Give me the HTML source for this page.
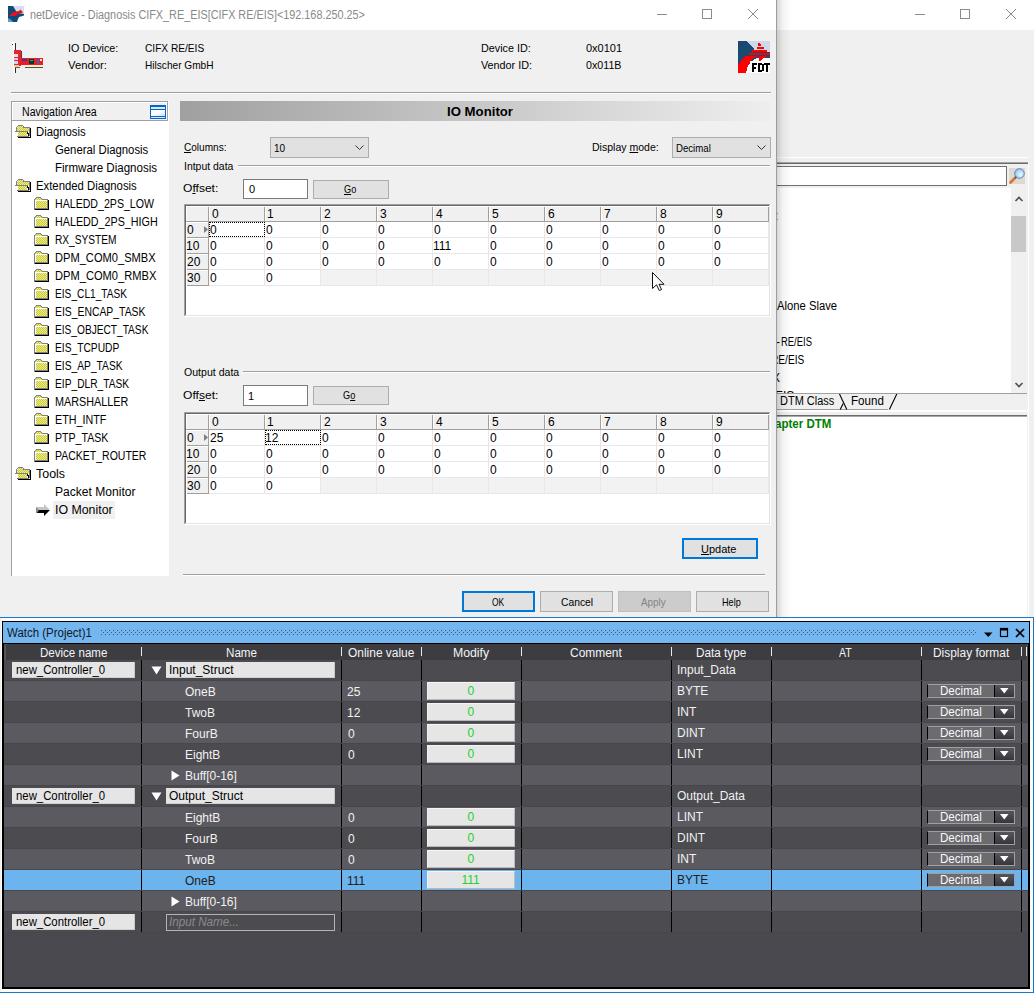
<!DOCTYPE html>
<html><head><meta charset="utf-8"><style>
html,body{margin:0;padding:0;}
body{width:1034px;height:993px;overflow:hidden;position:relative;background:#f0f0f0;font-family:"Liberation Sans",sans-serif;}
div{position:absolute;box-sizing:border-box;}
.t{height:auto;}
svg{position:absolute;}
</style></head><body>
<div style="left:776px;top:0px;width:258px;height:30px;background:#fff;"></div>
<svg style="left:900px;top:0px" width="134" height="30"><g stroke="#8c8c8c" stroke-width="1" fill="none" shape-rendering="crispEdges"><line x1="15" y1="14.5" x2="25" y2="14.5"/><rect x="60.5" y="9.5" width="9" height="9"/></g><g stroke="#8c8c8c" stroke-width="1" fill="none"><line x1="106" y1="9" x2="116" y2="19"/><line x1="116" y1="9" x2="106" y2="19"/></g></svg>
<div style="left:776px;top:157px;width:258px;height:1px;background:#fff;"></div>
<div style="left:776px;top:162px;width:252px;height:1px;background:#a4a4a4;"></div>
<div style="left:776px;top:163px;width:252px;height:1px;background:#6a6a6a;"></div>
<div style="left:1028px;top:163px;width:1px;height:454px;background:#fff;"></div>
<div style="left:760px;top:166px;width:247px;height:20px;background:#fff;border:1px solid #707070"></div>
<div style="left:1009px;top:168px;width:16px;height:16px;background:#dedad3;"></div>
<svg style="left:1009px;top:168px" width="16" height="16"><defs><radialGradient id="mg" cx="0.6" cy="0.6" r="0.6"><stop offset="0" stop-color="#e8fbff"/><stop offset="1" stop-color="#8ec8f0"/></radialGradient></defs><line x1="1.5" y1="14.5" x2="6" y2="10" stroke="#d9782a" stroke-width="2.6" stroke-linecap="round"/><line x1="6" y1="10" x2="8" y2="8" stroke="#3a5a7a" stroke-width="2"/><circle cx="10.5" cy="5.5" r="4.8" fill="url(#mg)" stroke="#6a70b0" stroke-width="0.9"/></svg>
<div style="left:760px;top:188px;width:251px;height:205px;background:#fff;"></div>
<div style="left:1011px;top:188px;width:16px;height:205px;background:#f0f0f0;"></div>
<div style="left:1011px;top:216px;width:15px;height:36px;background:#c8c8c8;"></div>
<svg style="left:1011px;top:188px" width="16" height="205"><polyline points="4.5,13 8,9.5 11.5,13" fill="none" stroke="#505050" stroke-width="1.6"/><polyline points="4.5,195 8,198.5 11.5,195" fill="none" stroke="#505050" stroke-width="1.6"/></svg>
<div style="left:760px;top:393px;width:267px;height:1px;background:#a0a0a0;"></div>
<div style="left:760px;top:409px;width:128px;height:1px;background:#a0a0a0;"></div>
<div style="left:760px;top:410px;width:268px;height:2px;background:#fff;"></div>
<div style="left:760px;top:415px;width:267px;height:1px;background:#6d6d6d;"></div>
<div style="left:760px;top:416px;width:267px;height:1px;background:#a8a8a8;"></div>
<div style="left:760px;top:417px;width:267px;height:200px;background:#fff;"></div>
<svg style="left:836px;top:392px" width="64" height="20"><g stroke="#000" stroke-width="1.1" fill="none"><line x1="3.5" y1="2" x2="10.8" y2="17.5"/><line x1="4.2" y1="17.5" x2="7.2" y2="11.5"/><line x1="60.8" y1="2" x2="53.4" y2="17.5"/></g></svg>
<div id="t0" class="t" style="left:775.00px;top:209px;font-size:12px;color:#000;font-weight:normal;font-family:'Liberation Sans',sans-serif;line-height:14px;white-space:pre;">:</div>
<div id="t1" class="t" style="left:777.00px;top:299px;font-size:12px;color:#000;font-weight:normal;font-family:'Liberation Sans',sans-serif;line-height:14px;white-space:pre;transform:scaleX(0.9375);transform-origin:0 0;">Alone Slave</div>
<div id="t2" class="t" style="left:781.28px;top:335px;font-size:12px;color:#000;font-weight:normal;font-family:'Liberation Sans',sans-serif;line-height:14px;white-space:pre;transform:scaleX(0.7857);transform-origin:0 0;">RE/EIS</div>
<div id="t3" class="t" style="left:776.00px;top:335px;font-size:12px;color:#000;font-weight:normal;font-family:'Liberation Sans',sans-serif;line-height:14px;white-space:pre;">-</div>
<div id="t4" class="t" style="left:771.08px;top:353px;font-size:12px;color:#000;font-weight:normal;font-family:'Liberation Sans',sans-serif;line-height:14px;white-space:pre;transform:scaleX(0.8462);transform-origin:0 0;">RE/EIS</div>
<div id="t5" class="t" style="left:772.00px;top:371px;font-size:12px;color:#000;font-weight:normal;font-family:'Liberation Sans',sans-serif;line-height:14px;white-space:pre;">X</div>
<div style="left:776px;top:388px;width:30px;height:5px;overflow:hidden"><div style="left:-1px;top:1px;font-size:12px;line-height:14px;white-space:pre;color:#000;font-family:'Liberation Sans',sans-serif">EIS</div></div>
<div id="t6" class="t" style="left:780.04px;top:394px;font-size:12px;color:#000;font-weight:normal;font-family:'Liberation Sans',sans-serif;line-height:14px;white-space:pre;transform:scaleX(0.9153);transform-origin:0 0;">DTM Class</div>
<div id="t7" class="t" style="left:851.40px;top:394px;font-size:12px;color:#000;font-weight:normal;font-family:'Liberation Sans',sans-serif;line-height:14px;white-space:pre;transform:scaleX(0.9647);transform-origin:0 0;">Found</div>
<div id="t8" class="t" style="left:774.98px;top:417px;font-size:12px;color:#008000;font-weight:bold;font-family:'Liberation Sans',sans-serif;line-height:14px;white-space:pre;transform:scaleX(0.9610);transform-origin:0 0;">apter DTM</div>
<div style="left:1029px;top:0px;width:5px;height:617px;background:#f0f0f0;top:30px;height:587px"></div>
<div style="left:0px;top:0px;width:776px;height:30px;background:#fff;"></div>
<div style="left:0px;top:30px;width:776px;height:587px;background:#f0f0f0;"></div>
<div style="left:776px;top:0px;width:1px;height:617px;background:#9c9c9c;"></div>
<div style="left:777px;top:0px;width:14px;height:617px;background:linear-gradient(to right, rgba(0,0,0,0.16), rgba(0,0,0,0.05) 40%, rgba(0,0,0,0));"></div>
<svg style="left:8px;top:6px" width="16" height="16"><rect x="0" y="0" width="16" height="16" fill="#fff"/><rect x="5" y="0" width="11" height="9" fill="#d8deec"/><polygon points="0,0 5,0 8,5 10,7 16,8 16,9.5 11,11 10,13 9,16 0,16" fill="#0f4a78"/><polygon points="0,12 3,13.5 5,16 0,16" fill="#5a9ad0"/><polygon points="1,10 3,8 5,6.5 8,5.5 11,5 12.5,3.5 15,6.5 12,7.5 10,7.5 9,9 7,10" fill="#e8101c"/></svg>
<svg style="left:640px;top:0px" width="136" height="30"><g stroke="#8c8c8c" stroke-width="1" fill="none" shape-rendering="crispEdges"><line x1="17" y1="14.5" x2="27" y2="14.5"/><rect x="62.5" y="9.5" width="9" height="9"/></g><g stroke="#8c8c8c" stroke-width="1" fill="none"><line x1="108" y1="9" x2="118" y2="19"/><line x1="118" y1="9" x2="108" y2="19"/></g></svg>
<svg style="left:8px;top:38px" width="40" height="40" shape-rendering="crispEdges"><rect x="3" y="4" width="3" height="1" fill="#fff"/><rect x="4" y="6" width="2" height="1" fill="#333"/><rect x="4" y="5" width="3" height="1" fill="#fff"/><rect x="5" y="5" width="2" height="30" fill="#fafafa"/><rect x="7" y="5" width="1" height="30" fill="#2a2a2a"/><rect x="6" y="12" width="7" height="16" fill="#e42630"/><rect x="6" y="16" width="4" height="3" fill="#f4e0d0"/><rect x="6" y="20" width="4" height="2" fill="#d8c8f0"/><rect x="6" y="23" width="4" height="3" fill="#c8d8f0"/><rect x="6" y="27" width="5" height="2" fill="#f0d090"/><rect x="13" y="13" width="1" height="7" fill="#404040"/><rect x="12" y="20" width="23" height="7" fill="#ee1c24"/><rect x="14" y="21" width="5" height="2" fill="#3040a0"/><rect x="21" y="21" width="5" height="5" fill="#0a3a2c"/><rect x="22" y="22" width="3" height="1" fill="#3aa08a"/><rect x="29" y="21" width="2" height="5" fill="#2a6ac0"/><rect x="32" y="21" width="2" height="2" fill="#fae8e8"/><rect x="16" y="27" width="19" height="2" fill="#f8f0c8"/><rect x="17" y="29" width="18" height="1" fill="#505050"/><rect x="7" y="29" width="5" height="1" fill="#606060"/></svg>
<svg style="left:738px;top:41px" width="32" height="32" shape-rendering="crispEdges"><rect x="0" y="0" width="32" height="32" fill="#fff"/><rect x="9" y="0" width="23" height="15" fill="#cdd8e8"/><polygon points="0,0 9,0 16,8 17,11 32,11 32,17 19,17 14,20 0,24" fill="#1a4a72"/><g fill="#f00"><polygon points="20,2 21,2 23,4 23,5 20,5"/><rect x="19" y="6" width="7" height="2"/><rect x="14" y="9" width="15" height="2"/><rect x="11" y="12" width="21" height="2"/><polygon points="0,23 3,20 5,17 8,15 19,15 19,16 15,17 13,19 12,22 10,25 9,28 8,32 0,32"/><polygon points="21,15 29,15 29,16 25,17 22,20 21,20"/></g><g fill="#000"><rect x="14" y="22" width="2" height="9"/><rect x="14" y="22" width="5" height="2"/><rect x="14" y="26" width="4" height="2"/><rect x="20" y="22" width="2" height="9"/><rect x="20" y="22" width="4" height="2"/><rect x="20" y="29" width="4" height="2"/><rect x="24" y="23" width="2" height="7"/><rect x="26" y="22" width="6" height="2"/><rect x="28" y="22" width="2" height="9"/></g></svg>
<div style="left:11px;top:92px;width:760px;height:1px;background:#a0a0a0;"></div>
<div style="left:11px;top:93px;width:760px;height:1px;background:#fff;"></div>
<div style="left:11px;top:101px;width:158px;height:475px;background:#fff;border-left:1px solid #a0a0a0"></div>
<div style="left:11px;top:101px;width:157px;height:20px;background:#f0f0f0;border:1px solid #a0a0a0;border-bottom:1px solid #a0a0a0;box-shadow:inset 1px 1px 0 #fff, inset -1px 0 0 #fff"></div>
<svg style="left:150px;top:105px" width="16" height="14" shape-rendering="crispEdges"><defs><linearGradient id="nvg" x1="0" y1="0" x2="1" y2="1"><stop offset="0.5" stop-color="#fbfdff"/><stop offset="1" stop-color="#c4dcf6"/></linearGradient></defs><rect x="0" y="0" width="16" height="14" fill="#0a62cc"/><rect x="1" y="2" width="14" height="2" fill="#cdeeff"/><rect x="1" y="5" width="14" height="6" fill="url(#nvg)"/><rect x="1" y="12" width="14" height="1" fill="#cdeeff"/></svg>
<div style="left:180px;top:101px;width:591px;height:20px;background:linear-gradient(to right,#a0a0a0,#eeeeee);"></div>
<div style="left:270px;top:137px;width:99px;height:21px;background:#e1e1e1;border:1px solid #adadad"></div>
<svg style="left:355px;top:145px" width="10" height="6"><polyline points="0.5,0.5 4.5,4.5 8.5,0.5" fill="none" stroke="#333" stroke-width="1"/></svg>
<div style="left:672px;top:137px;width:99px;height:21px;background:#e1e1e1;border:1px solid #adadad"></div>
<svg style="left:757px;top:145px" width="10" height="6"><polyline points="0.5,0.5 4.5,4.5 8.5,0.5" fill="none" stroke="#333" stroke-width="1"/></svg>
<div style="left:238px;top:165px;width:532px;height:1px;background:#a0a0a0;"></div>
<div style="left:238px;top:166px;width:532px;height:1px;background:#fff;"></div>
<div style="left:243px;top:371px;width:527px;height:1px;background:#a0a0a0;"></div>
<div style="left:243px;top:372px;width:527px;height:1px;background:#fff;"></div>
<div style="left:243px;top:179px;width:65px;height:20px;background:#fff;border:1px solid #7a7a7a"></div>
<div style="left:243px;top:385px;width:65px;height:21px;background:#fff;border:1px solid #7a7a7a"></div>
<div style="left:313px;top:180px;width:76px;height:19px;background:#e1e1e1;border:1px solid #adadad"></div>
<div style="left:313px;top:386px;width:76px;height:19px;background:#e1e1e1;border:1px solid #adadad"></div>
<div style="left:184px;top:204px;width:586px;height:112px;background:#fff;border-top:1px solid #a0a0a0;border-left:1px solid #a0a0a0"></div>
<div style="left:185px;top:205px;width:585px;height:111px;background:transparent;border-top:1px solid #696969;border-left:1px solid #696969"></div>
<div style="left:185px;top:315px;width:585px;height:1px;background:#e3e3e3;"></div>
<div style="left:769px;top:205px;width:1px;height:111px;background:#e3e3e3;"></div>
<div style="left:184px;top:316px;width:587px;height:1px;background:#fff;"></div>
<div style="left:770px;top:204px;width:1px;height:113px;background:#fff;"></div>
<div style="left:186px;top:206px;width:583px;height:15px;background:#f0f0f0;"></div>
<div style="left:186px;top:221px;width:23px;height:64px;background:#f0f0f0;"></div>
<div style="left:186px;top:221px;width:583px;height:1px;background:#a0a0a0;"></div>
<div style="left:208px;top:206px;width:1px;height:15px;background:#a0a0a0;"></div>
<div style="left:264px;top:206px;width:1px;height:15px;background:#a0a0a0;"></div>
<div style="left:320px;top:206px;width:1px;height:15px;background:#a0a0a0;"></div>
<div style="left:376px;top:206px;width:1px;height:15px;background:#a0a0a0;"></div>
<div style="left:432px;top:206px;width:1px;height:15px;background:#a0a0a0;"></div>
<div style="left:488px;top:206px;width:1px;height:15px;background:#a0a0a0;"></div>
<div style="left:544px;top:206px;width:1px;height:15px;background:#a0a0a0;"></div>
<div style="left:600px;top:206px;width:1px;height:15px;background:#a0a0a0;"></div>
<div style="left:656px;top:206px;width:1px;height:15px;background:#a0a0a0;"></div>
<div style="left:712px;top:206px;width:1px;height:15px;background:#a0a0a0;"></div>
<div style="left:768px;top:206px;width:1px;height:15px;background:#a0a0a0;"></div>
<div style="left:186px;top:206px;width:1px;height:15px;background:#fff;"></div>
<div style="left:209px;top:206px;width:1px;height:15px;background:#fff;"></div>
<div style="left:265px;top:206px;width:1px;height:15px;background:#fff;"></div>
<div style="left:321px;top:206px;width:1px;height:15px;background:#fff;"></div>
<div style="left:377px;top:206px;width:1px;height:15px;background:#fff;"></div>
<div style="left:433px;top:206px;width:1px;height:15px;background:#fff;"></div>
<div style="left:489px;top:206px;width:1px;height:15px;background:#fff;"></div>
<div style="left:545px;top:206px;width:1px;height:15px;background:#fff;"></div>
<div style="left:601px;top:206px;width:1px;height:15px;background:#fff;"></div>
<div style="left:657px;top:206px;width:1px;height:15px;background:#fff;"></div>
<div style="left:713px;top:206px;width:1px;height:15px;background:#fff;"></div>
<div style="left:186px;top:206px;width:583px;height:1px;background:#fff;"></div>
<div style="left:186px;top:237px;width:22px;height:1px;background:#a0a0a0;"></div>
<div style="left:186px;top:222px;width:22px;height:1px;background:#fff;"></div>
<div style="left:186px;top:253px;width:22px;height:1px;background:#a0a0a0;"></div>
<div style="left:186px;top:238px;width:22px;height:1px;background:#fff;"></div>
<div style="left:186px;top:269px;width:22px;height:1px;background:#a0a0a0;"></div>
<div style="left:186px;top:254px;width:22px;height:1px;background:#fff;"></div>
<div style="left:186px;top:285px;width:22px;height:1px;background:#a0a0a0;"></div>
<div style="left:186px;top:270px;width:22px;height:1px;background:#fff;"></div>
<div style="left:186px;top:222px;width:1px;height:64px;background:#fff;"></div>
<div style="left:208px;top:222px;width:1px;height:64px;background:#a0a0a0;"></div>
<div style="left:320px;top:270px;width:449px;height:15px;background:#f2f2f2;"></div>
<div style="left:209px;top:237px;width:560px;height:1px;background:#e8e8e8;"></div>
<div style="left:209px;top:253px;width:560px;height:1px;background:#e8e8e8;"></div>
<div style="left:209px;top:269px;width:560px;height:1px;background:#e8e8e8;"></div>
<div style="left:209px;top:285px;width:560px;height:1px;background:#e8e8e8;"></div>
<div style="left:264px;top:222px;width:1px;height:64px;background:#e8e8e8;"></div>
<div style="left:320px;top:222px;width:1px;height:64px;background:#e8e8e8;"></div>
<div style="left:376px;top:222px;width:1px;height:64px;background:#e8e8e8;"></div>
<div style="left:432px;top:222px;width:1px;height:64px;background:#e8e8e8;"></div>
<div style="left:488px;top:222px;width:1px;height:64px;background:#e8e8e8;"></div>
<div style="left:544px;top:222px;width:1px;height:64px;background:#e8e8e8;"></div>
<div style="left:600px;top:222px;width:1px;height:64px;background:#e8e8e8;"></div>
<div style="left:656px;top:222px;width:1px;height:64px;background:#e8e8e8;"></div>
<div style="left:712px;top:222px;width:1px;height:64px;background:#e8e8e8;"></div>
<div style="left:768px;top:222px;width:1px;height:64px;background:#e8e8e8;"></div>
<div style="left:209px;top:222px;width:56px;height:15px;background:transparent;border:1px dotted #000"></div>
<svg style="left:204px;top:226px" width="5" height="8"><polygon points="0,0 4,3.5 0,7" fill="#808080"/></svg>
<div style="left:184px;top:412px;width:586px;height:112px;background:#fff;border-top:1px solid #a0a0a0;border-left:1px solid #a0a0a0"></div>
<div style="left:185px;top:413px;width:585px;height:111px;background:transparent;border-top:1px solid #696969;border-left:1px solid #696969"></div>
<div style="left:185px;top:523px;width:585px;height:1px;background:#e3e3e3;"></div>
<div style="left:769px;top:413px;width:1px;height:111px;background:#e3e3e3;"></div>
<div style="left:184px;top:524px;width:587px;height:1px;background:#fff;"></div>
<div style="left:770px;top:412px;width:1px;height:113px;background:#fff;"></div>
<div style="left:186px;top:414px;width:583px;height:15px;background:#f0f0f0;"></div>
<div style="left:186px;top:429px;width:23px;height:64px;background:#f0f0f0;"></div>
<div style="left:186px;top:429px;width:583px;height:1px;background:#a0a0a0;"></div>
<div style="left:208px;top:414px;width:1px;height:15px;background:#a0a0a0;"></div>
<div style="left:264px;top:414px;width:1px;height:15px;background:#a0a0a0;"></div>
<div style="left:320px;top:414px;width:1px;height:15px;background:#a0a0a0;"></div>
<div style="left:376px;top:414px;width:1px;height:15px;background:#a0a0a0;"></div>
<div style="left:432px;top:414px;width:1px;height:15px;background:#a0a0a0;"></div>
<div style="left:488px;top:414px;width:1px;height:15px;background:#a0a0a0;"></div>
<div style="left:544px;top:414px;width:1px;height:15px;background:#a0a0a0;"></div>
<div style="left:600px;top:414px;width:1px;height:15px;background:#a0a0a0;"></div>
<div style="left:656px;top:414px;width:1px;height:15px;background:#a0a0a0;"></div>
<div style="left:712px;top:414px;width:1px;height:15px;background:#a0a0a0;"></div>
<div style="left:768px;top:414px;width:1px;height:15px;background:#a0a0a0;"></div>
<div style="left:186px;top:414px;width:1px;height:15px;background:#fff;"></div>
<div style="left:209px;top:414px;width:1px;height:15px;background:#fff;"></div>
<div style="left:265px;top:414px;width:1px;height:15px;background:#fff;"></div>
<div style="left:321px;top:414px;width:1px;height:15px;background:#fff;"></div>
<div style="left:377px;top:414px;width:1px;height:15px;background:#fff;"></div>
<div style="left:433px;top:414px;width:1px;height:15px;background:#fff;"></div>
<div style="left:489px;top:414px;width:1px;height:15px;background:#fff;"></div>
<div style="left:545px;top:414px;width:1px;height:15px;background:#fff;"></div>
<div style="left:601px;top:414px;width:1px;height:15px;background:#fff;"></div>
<div style="left:657px;top:414px;width:1px;height:15px;background:#fff;"></div>
<div style="left:713px;top:414px;width:1px;height:15px;background:#fff;"></div>
<div style="left:186px;top:414px;width:583px;height:1px;background:#fff;"></div>
<div style="left:186px;top:445px;width:22px;height:1px;background:#a0a0a0;"></div>
<div style="left:186px;top:430px;width:22px;height:1px;background:#fff;"></div>
<div style="left:186px;top:461px;width:22px;height:1px;background:#a0a0a0;"></div>
<div style="left:186px;top:446px;width:22px;height:1px;background:#fff;"></div>
<div style="left:186px;top:477px;width:22px;height:1px;background:#a0a0a0;"></div>
<div style="left:186px;top:462px;width:22px;height:1px;background:#fff;"></div>
<div style="left:186px;top:493px;width:22px;height:1px;background:#a0a0a0;"></div>
<div style="left:186px;top:478px;width:22px;height:1px;background:#fff;"></div>
<div style="left:186px;top:430px;width:1px;height:64px;background:#fff;"></div>
<div style="left:208px;top:430px;width:1px;height:64px;background:#a0a0a0;"></div>
<div style="left:320px;top:478px;width:449px;height:15px;background:#f2f2f2;"></div>
<div style="left:209px;top:445px;width:560px;height:1px;background:#e8e8e8;"></div>
<div style="left:209px;top:461px;width:560px;height:1px;background:#e8e8e8;"></div>
<div style="left:209px;top:477px;width:560px;height:1px;background:#e8e8e8;"></div>
<div style="left:209px;top:493px;width:560px;height:1px;background:#e8e8e8;"></div>
<div style="left:264px;top:430px;width:1px;height:64px;background:#e8e8e8;"></div>
<div style="left:320px;top:430px;width:1px;height:64px;background:#e8e8e8;"></div>
<div style="left:376px;top:430px;width:1px;height:64px;background:#e8e8e8;"></div>
<div style="left:432px;top:430px;width:1px;height:64px;background:#e8e8e8;"></div>
<div style="left:488px;top:430px;width:1px;height:64px;background:#e8e8e8;"></div>
<div style="left:544px;top:430px;width:1px;height:64px;background:#e8e8e8;"></div>
<div style="left:600px;top:430px;width:1px;height:64px;background:#e8e8e8;"></div>
<div style="left:656px;top:430px;width:1px;height:64px;background:#e8e8e8;"></div>
<div style="left:712px;top:430px;width:1px;height:64px;background:#e8e8e8;"></div>
<div style="left:768px;top:430px;width:1px;height:64px;background:#e8e8e8;"></div>
<div style="left:265px;top:430px;width:56px;height:15px;background:transparent;border:1px dotted #000"></div>
<svg style="left:204px;top:434px" width="5" height="8"><polygon points="0,0 4,3.5 0,7" fill="#808080"/></svg>
<div style="left:682px;top:538px;width:76px;height:21px;background:#e1e1e1;border:2px solid #0078d7"></div>
<div style="left:183px;top:574px;width:582px;height:1px;background:#a0a0a0;"></div>
<div style="left:183px;top:575px;width:582px;height:1px;background:#fff;"></div>
<div style="left:462px;top:591px;width:73px;height:21px;background:#e1e1e1;border:2px solid #0078d7"></div>
<div style="left:540px;top:591px;width:73px;height:21px;background:#e1e1e1;border:1px solid #adadad"></div>
<div style="left:618px;top:591px;width:73px;height:21px;background:#cccccc;border:1px solid #bfbfbf"></div>
<div style="left:696px;top:591px;width:73px;height:21px;background:#e1e1e1;border:1px solid #adadad"></div>
<div id="t9" class="t" style="left:30.00px;top:8px;font-size:12px;color:#8a8a8a;font-weight:normal;font-family:'Liberation Sans',sans-serif;line-height:14px;white-space:pre;transform:scaleX(0.9030);transform-origin:0 0;">netDevice - Diagnosis CIFX_RE_EIS[CIFX RE/EIS]&lt;192.168.250.25&gt;</div>
<div id="t10" class="t" style="left:68.00px;top:42px;font-size:11px;color:#000;font-weight:normal;font-family:'Liberation Sans',sans-serif;line-height:13px;white-space:pre;transform:scaleX(0.9804);transform-origin:0 0;">IO Device:</div>
<div id="t11" class="t" style="left:68.00px;top:59px;font-size:11px;color:#000;font-weight:normal;font-family:'Liberation Sans',sans-serif;line-height:13px;white-space:pre;transform:scaleX(1.0270);transform-origin:0 0;">Vendor:</div>
<div id="t12" class="t" style="left:145.00px;top:42px;font-size:11px;color:#000;font-weight:normal;font-family:'Liberation Sans',sans-serif;line-height:13px;white-space:pre;transform:scaleX(0.9219);transform-origin:0 0;">CIFX RE/EIS</div>
<div id="t13" class="t" style="left:145.00px;top:59px;font-size:11px;color:#000;font-weight:normal;font-family:'Liberation Sans',sans-serif;line-height:13px;white-space:pre;transform:scaleX(0.9189);transform-origin:0 0;">Hilscher GmbH</div>
<div id="t14" class="t" style="left:481.00px;top:42px;font-size:11px;color:#000;font-weight:normal;font-family:'Liberation Sans',sans-serif;line-height:13px;white-space:pre;transform:scaleX(0.9800);transform-origin:0 0;">Device ID:</div>
<div id="t15" class="t" style="left:481.00px;top:59px;font-size:11px;color:#000;font-weight:normal;font-family:'Liberation Sans',sans-serif;line-height:13px;white-space:pre;transform:scaleX(0.9808);transform-origin:0 0;">Vendor ID:</div>
<div id="t16" class="t" style="left:586.00px;top:42px;font-size:11px;color:#000;font-weight:normal;font-family:'Liberation Sans',sans-serif;line-height:13px;white-space:pre;">0x0101</div>
<div id="t17" class="t" style="left:586.00px;top:59px;font-size:11px;color:#000;font-weight:normal;font-family:'Liberation Sans',sans-serif;line-height:13px;white-space:pre;transform:scaleX(0.9730);transform-origin:0 0;">0x011B</div>
<div id="t18" class="t" style="left:22.00px;top:105px;font-size:12px;color:#000;font-weight:normal;font-family:'Liberation Sans',sans-serif;line-height:14px;white-space:pre;transform:scaleX(0.8824);transform-origin:0 0;">Navigation Area</div>
<div id="t19" class="t" style="left:447.00px;top:104px;font-size:13px;color:#000;font-weight:bold;font-family:'Liberation Sans',sans-serif;line-height:15px;white-space:pre;transform:scaleX(1.0154);transform-origin:0 0;">IO Monitor</div>
<svg style="left:0;top:0" width="1" height="1"><defs><pattern id="dth" width="2" height="2" patternUnits="userSpaceOnUse"><rect width="2" height="2" fill="#ffff00"/><rect x="1" y="0" width="1" height="1" fill="#b8b8c4"/><rect x="0" y="1" width="1" height="1" fill="#b8b8c4"/></pattern></defs></svg>
<div style="left:53px;top:501px;width:62px;height:18px;background:#f0f0f0;"></div>
<svg style="left:15px;top:125px" width="17" height="13" shape-rendering="crispEdges"><g fill="#808080"><rect x="3" y="0" width="5" height="1"/><rect x="2" y="1" width="1" height="1"/><rect x="8" y="1" width="1" height="2"/><rect x="9" y="2" width="6" height="1"/><rect x="1" y="2" width="1" height="4"/><rect x="14" y="3" width="1" height="8"/><rect x="0" y="6" width="13" height="1"/><rect x="2" y="11" width="12" height="1"/></g><rect x="3" y="1" width="5" height="2" fill="url(#dth)"/><rect x="2" y="3" width="12" height="3" fill="url(#dth)"/><rect x="1" y="7" width="2" height="4" fill="#fff"/><rect x="3" y="7" width="9" height="4" fill="url(#dth)"/><g fill="#000"><rect x="12" y="7" width="1" height="1"/><rect x="12" y="8" width="2" height="1"/><rect x="13" y="9" width="1" height="2"/><rect x="15" y="3" width="1" height="10"/><rect x="3" y="12" width="13" height="1"/></g></svg>
<div id="t20" class="t" style="left:36.00px;top:125px;font-size:12px;color:#000;font-weight:normal;font-family:'Liberation Sans',sans-serif;line-height:14px;white-space:pre;transform:scaleX(0.9434);transform-origin:0 0;">Diagnosis</div>
<div id="t21" class="t" style="left:55.00px;top:143px;font-size:12px;color:#000;font-weight:normal;font-family:'Liberation Sans',sans-serif;line-height:14px;white-space:pre;transform:scaleX(0.9444);transform-origin:0 0;">General Diagnosis</div>
<div id="t22" class="t" style="left:55.00px;top:161px;font-size:12px;color:#000;font-weight:normal;font-family:'Liberation Sans',sans-serif;line-height:14px;white-space:pre;transform:scaleX(0.9623);transform-origin:0 0;">Firmware Diagnosis</div>
<svg style="left:15px;top:179px" width="17" height="13" shape-rendering="crispEdges"><g fill="#808080"><rect x="3" y="0" width="5" height="1"/><rect x="2" y="1" width="1" height="1"/><rect x="8" y="1" width="1" height="2"/><rect x="9" y="2" width="6" height="1"/><rect x="1" y="2" width="1" height="4"/><rect x="14" y="3" width="1" height="8"/><rect x="0" y="6" width="13" height="1"/><rect x="2" y="11" width="12" height="1"/></g><rect x="3" y="1" width="5" height="2" fill="url(#dth)"/><rect x="2" y="3" width="12" height="3" fill="url(#dth)"/><rect x="1" y="7" width="2" height="4" fill="#fff"/><rect x="3" y="7" width="9" height="4" fill="url(#dth)"/><g fill="#000"><rect x="12" y="7" width="1" height="1"/><rect x="12" y="8" width="2" height="1"/><rect x="13" y="9" width="1" height="2"/><rect x="15" y="3" width="1" height="10"/><rect x="3" y="12" width="13" height="1"/></g></svg>
<div id="t23" class="t" style="left:36.00px;top:179px;font-size:12px;color:#000;font-weight:normal;font-family:'Liberation Sans',sans-serif;line-height:14px;white-space:pre;transform:scaleX(0.9439);transform-origin:0 0;">Extended Diagnosis</div>
<svg style="left:34px;top:197px" width="16" height="14" shape-rendering="crispEdges"><g fill="#808080"><rect x="2" y="0" width="5" height="1"/><rect x="1" y="1" width="1" height="1"/><rect x="7" y="1" width="1" height="1"/><rect x="8" y="2" width="6" height="1"/><rect x="0" y="2" width="1" height="11"/><rect x="13" y="2" width="1" height="11"/><rect x="1" y="11" width="13" height="1"/></g><rect x="2" y="1" width="5" height="1" fill="url(#dth)"/><rect x="1" y="2" width="7" height="1" fill="url(#dth)"/><rect x="1" y="3" width="12" height="1" fill="#fff"/><rect x="1" y="3" width="1" height="8" fill="#fff"/><rect x="2" y="4" width="11" height="7" fill="url(#dth)"/><g fill="#000"><rect x="14" y="3" width="1" height="10"/><rect x="1" y="12" width="14" height="1"/></g></svg>
<div id="t24" class="t" style="left:55.06px;top:197px;font-size:12px;color:#000;font-weight:normal;font-family:'Liberation Sans',sans-serif;line-height:14px;white-space:pre;transform:scaleX(0.8839);transform-origin:0 0;">HALEDD_2PS_LOW</div>
<svg style="left:34px;top:215px" width="16" height="14" shape-rendering="crispEdges"><g fill="#808080"><rect x="2" y="0" width="5" height="1"/><rect x="1" y="1" width="1" height="1"/><rect x="7" y="1" width="1" height="1"/><rect x="8" y="2" width="6" height="1"/><rect x="0" y="2" width="1" height="11"/><rect x="13" y="2" width="1" height="11"/><rect x="1" y="11" width="13" height="1"/></g><rect x="2" y="1" width="5" height="1" fill="url(#dth)"/><rect x="1" y="2" width="7" height="1" fill="url(#dth)"/><rect x="1" y="3" width="12" height="1" fill="#fff"/><rect x="1" y="3" width="1" height="8" fill="#fff"/><rect x="2" y="4" width="11" height="7" fill="url(#dth)"/><g fill="#000"><rect x="14" y="3" width="1" height="10"/><rect x="1" y="12" width="14" height="1"/></g></svg>
<div id="t25" class="t" style="left:55.05px;top:215px;font-size:12px;color:#000;font-weight:normal;font-family:'Liberation Sans',sans-serif;line-height:14px;white-space:pre;transform:scaleX(0.8947);transform-origin:0 0;">HALEDD_2PS_HIGH</div>
<svg style="left:34px;top:233px" width="16" height="14" shape-rendering="crispEdges"><g fill="#808080"><rect x="2" y="0" width="5" height="1"/><rect x="1" y="1" width="1" height="1"/><rect x="7" y="1" width="1" height="1"/><rect x="8" y="2" width="6" height="1"/><rect x="0" y="2" width="1" height="11"/><rect x="13" y="2" width="1" height="11"/><rect x="1" y="11" width="13" height="1"/></g><rect x="2" y="1" width="5" height="1" fill="url(#dth)"/><rect x="1" y="2" width="7" height="1" fill="url(#dth)"/><rect x="1" y="3" width="12" height="1" fill="#fff"/><rect x="1" y="3" width="1" height="8" fill="#fff"/><rect x="2" y="4" width="11" height="7" fill="url(#dth)"/><g fill="#000"><rect x="14" y="3" width="1" height="10"/><rect x="1" y="12" width="14" height="1"/></g></svg>
<div id="t26" class="t" style="left:55.08px;top:233px;font-size:12px;color:#000;font-weight:normal;font-family:'Liberation Sans',sans-serif;line-height:14px;white-space:pre;transform:scaleX(0.8472);transform-origin:0 0;">RX_SYSTEM</div>
<svg style="left:34px;top:251px" width="16" height="14" shape-rendering="crispEdges"><g fill="#808080"><rect x="2" y="0" width="5" height="1"/><rect x="1" y="1" width="1" height="1"/><rect x="7" y="1" width="1" height="1"/><rect x="8" y="2" width="6" height="1"/><rect x="0" y="2" width="1" height="11"/><rect x="13" y="2" width="1" height="11"/><rect x="1" y="11" width="13" height="1"/></g><rect x="2" y="1" width="5" height="1" fill="url(#dth)"/><rect x="1" y="2" width="7" height="1" fill="url(#dth)"/><rect x="1" y="3" width="12" height="1" fill="#fff"/><rect x="1" y="3" width="1" height="8" fill="#fff"/><rect x="2" y="4" width="11" height="7" fill="url(#dth)"/><g fill="#000"><rect x="14" y="3" width="1" height="10"/><rect x="1" y="12" width="14" height="1"/></g></svg>
<div id="t27" class="t" style="left:55.04px;top:251px;font-size:12px;color:#000;font-weight:normal;font-family:'Liberation Sans',sans-serif;line-height:14px;white-space:pre;transform:scaleX(0.9259);transform-origin:0 0;">DPM_COM0_SMBX</div>
<svg style="left:34px;top:269px" width="16" height="14" shape-rendering="crispEdges"><g fill="#808080"><rect x="2" y="0" width="5" height="1"/><rect x="1" y="1" width="1" height="1"/><rect x="7" y="1" width="1" height="1"/><rect x="8" y="2" width="6" height="1"/><rect x="0" y="2" width="1" height="11"/><rect x="13" y="2" width="1" height="11"/><rect x="1" y="11" width="13" height="1"/></g><rect x="2" y="1" width="5" height="1" fill="url(#dth)"/><rect x="1" y="2" width="7" height="1" fill="url(#dth)"/><rect x="1" y="3" width="12" height="1" fill="#fff"/><rect x="1" y="3" width="1" height="8" fill="#fff"/><rect x="2" y="4" width="11" height="7" fill="url(#dth)"/><g fill="#000"><rect x="14" y="3" width="1" height="10"/><rect x="1" y="12" width="14" height="1"/></g></svg>
<div id="t28" class="t" style="left:55.04px;top:269px;font-size:12px;color:#000;font-weight:normal;font-family:'Liberation Sans',sans-serif;line-height:14px;white-space:pre;transform:scaleX(0.9266);transform-origin:0 0;">DPM_COM0_RMBX</div>
<svg style="left:34px;top:287px" width="16" height="14" shape-rendering="crispEdges"><g fill="#808080"><rect x="2" y="0" width="5" height="1"/><rect x="1" y="1" width="1" height="1"/><rect x="7" y="1" width="1" height="1"/><rect x="8" y="2" width="6" height="1"/><rect x="0" y="2" width="1" height="11"/><rect x="13" y="2" width="1" height="11"/><rect x="1" y="11" width="13" height="1"/></g><rect x="2" y="1" width="5" height="1" fill="url(#dth)"/><rect x="1" y="2" width="7" height="1" fill="url(#dth)"/><rect x="1" y="3" width="12" height="1" fill="#fff"/><rect x="1" y="3" width="1" height="8" fill="#fff"/><rect x="2" y="4" width="11" height="7" fill="url(#dth)"/><g fill="#000"><rect x="14" y="3" width="1" height="10"/><rect x="1" y="12" width="14" height="1"/></g></svg>
<div id="t29" class="t" style="left:55.08px;top:287px;font-size:12px;color:#000;font-weight:normal;font-family:'Liberation Sans',sans-serif;line-height:14px;white-space:pre;transform:scaleX(0.8471);transform-origin:0 0;">EIS_CL1_TASK</div>
<svg style="left:34px;top:305px" width="16" height="14" shape-rendering="crispEdges"><g fill="#808080"><rect x="2" y="0" width="5" height="1"/><rect x="1" y="1" width="1" height="1"/><rect x="7" y="1" width="1" height="1"/><rect x="8" y="2" width="6" height="1"/><rect x="0" y="2" width="1" height="11"/><rect x="13" y="2" width="1" height="11"/><rect x="1" y="11" width="13" height="1"/></g><rect x="2" y="1" width="5" height="1" fill="url(#dth)"/><rect x="1" y="2" width="7" height="1" fill="url(#dth)"/><rect x="1" y="3" width="12" height="1" fill="#fff"/><rect x="1" y="3" width="1" height="8" fill="#fff"/><rect x="2" y="4" width="11" height="7" fill="url(#dth)"/><g fill="#000"><rect x="14" y="3" width="1" height="10"/><rect x="1" y="12" width="14" height="1"/></g></svg>
<div id="t30" class="t" style="left:55.07px;top:305px;font-size:12px;color:#000;font-weight:normal;font-family:'Liberation Sans',sans-serif;line-height:14px;white-space:pre;transform:scaleX(0.8654);transform-origin:0 0;">EIS_ENCAP_TASK</div>
<svg style="left:34px;top:323px" width="16" height="14" shape-rendering="crispEdges"><g fill="#808080"><rect x="2" y="0" width="5" height="1"/><rect x="1" y="1" width="1" height="1"/><rect x="7" y="1" width="1" height="1"/><rect x="8" y="2" width="6" height="1"/><rect x="0" y="2" width="1" height="11"/><rect x="13" y="2" width="1" height="11"/><rect x="1" y="11" width="13" height="1"/></g><rect x="2" y="1" width="5" height="1" fill="url(#dth)"/><rect x="1" y="2" width="7" height="1" fill="url(#dth)"/><rect x="1" y="3" width="12" height="1" fill="#fff"/><rect x="1" y="3" width="1" height="8" fill="#fff"/><rect x="2" y="4" width="11" height="7" fill="url(#dth)"/><g fill="#000"><rect x="14" y="3" width="1" height="10"/><rect x="1" y="12" width="14" height="1"/></g></svg>
<div id="t31" class="t" style="left:55.08px;top:323px;font-size:12px;color:#000;font-weight:normal;font-family:'Liberation Sans',sans-serif;line-height:14px;white-space:pre;transform:scaleX(0.8455);transform-origin:0 0;">EIS_OBJECT_TASK</div>
<svg style="left:34px;top:341px" width="16" height="14" shape-rendering="crispEdges"><g fill="#808080"><rect x="2" y="0" width="5" height="1"/><rect x="1" y="1" width="1" height="1"/><rect x="7" y="1" width="1" height="1"/><rect x="8" y="2" width="6" height="1"/><rect x="0" y="2" width="1" height="11"/><rect x="13" y="2" width="1" height="11"/><rect x="1" y="11" width="13" height="1"/></g><rect x="2" y="1" width="5" height="1" fill="url(#dth)"/><rect x="1" y="2" width="7" height="1" fill="url(#dth)"/><rect x="1" y="3" width="12" height="1" fill="#fff"/><rect x="1" y="3" width="1" height="8" fill="#fff"/><rect x="2" y="4" width="11" height="7" fill="url(#dth)"/><g fill="#000"><rect x="14" y="3" width="1" height="10"/><rect x="1" y="12" width="14" height="1"/></g></svg>
<div id="t32" class="t" style="left:55.07px;top:341px;font-size:12px;color:#000;font-weight:normal;font-family:'Liberation Sans',sans-serif;line-height:14px;white-space:pre;transform:scaleX(0.8533);transform-origin:0 0;">EIS_TCPUDP</div>
<svg style="left:34px;top:359px" width="16" height="14" shape-rendering="crispEdges"><g fill="#808080"><rect x="2" y="0" width="5" height="1"/><rect x="1" y="1" width="1" height="1"/><rect x="7" y="1" width="1" height="1"/><rect x="8" y="2" width="6" height="1"/><rect x="0" y="2" width="1" height="11"/><rect x="13" y="2" width="1" height="11"/><rect x="1" y="11" width="13" height="1"/></g><rect x="2" y="1" width="5" height="1" fill="url(#dth)"/><rect x="1" y="2" width="7" height="1" fill="url(#dth)"/><rect x="1" y="3" width="12" height="1" fill="#fff"/><rect x="1" y="3" width="1" height="8" fill="#fff"/><rect x="2" y="4" width="11" height="7" fill="url(#dth)"/><g fill="#000"><rect x="14" y="3" width="1" height="10"/><rect x="1" y="12" width="14" height="1"/></g></svg>
<div id="t33" class="t" style="left:55.07px;top:359px;font-size:12px;color:#000;font-weight:normal;font-family:'Liberation Sans',sans-serif;line-height:14px;white-space:pre;transform:scaleX(0.8544);transform-origin:0 0;">EIS_AP_TASK</div>
<svg style="left:34px;top:377px" width="16" height="14" shape-rendering="crispEdges"><g fill="#808080"><rect x="2" y="0" width="5" height="1"/><rect x="1" y="1" width="1" height="1"/><rect x="7" y="1" width="1" height="1"/><rect x="8" y="2" width="6" height="1"/><rect x="0" y="2" width="1" height="11"/><rect x="13" y="2" width="1" height="11"/><rect x="1" y="11" width="13" height="1"/></g><rect x="2" y="1" width="5" height="1" fill="url(#dth)"/><rect x="1" y="2" width="7" height="1" fill="url(#dth)"/><rect x="1" y="3" width="12" height="1" fill="#fff"/><rect x="1" y="3" width="1" height="8" fill="#fff"/><rect x="2" y="4" width="11" height="7" fill="url(#dth)"/><g fill="#000"><rect x="14" y="3" width="1" height="10"/><rect x="1" y="12" width="14" height="1"/></g></svg>
<div id="t34" class="t" style="left:55.07px;top:377px;font-size:12px;color:#000;font-weight:normal;font-family:'Liberation Sans',sans-serif;line-height:14px;white-space:pre;transform:scaleX(0.8506);transform-origin:0 0;">EIP_DLR_TASK</div>
<svg style="left:34px;top:395px" width="16" height="14" shape-rendering="crispEdges"><g fill="#808080"><rect x="2" y="0" width="5" height="1"/><rect x="1" y="1" width="1" height="1"/><rect x="7" y="1" width="1" height="1"/><rect x="8" y="2" width="6" height="1"/><rect x="0" y="2" width="1" height="11"/><rect x="13" y="2" width="1" height="11"/><rect x="1" y="11" width="13" height="1"/></g><rect x="2" y="1" width="5" height="1" fill="url(#dth)"/><rect x="1" y="2" width="7" height="1" fill="url(#dth)"/><rect x="1" y="3" width="12" height="1" fill="#fff"/><rect x="1" y="3" width="1" height="8" fill="#fff"/><rect x="2" y="4" width="11" height="7" fill="url(#dth)"/><g fill="#000"><rect x="14" y="3" width="1" height="10"/><rect x="1" y="12" width="14" height="1"/></g></svg>
<div id="t35" class="t" style="left:55.05px;top:395px;font-size:12px;color:#000;font-weight:normal;font-family:'Liberation Sans',sans-serif;line-height:14px;white-space:pre;transform:scaleX(0.9012);transform-origin:0 0;">MARSHALLER</div>
<svg style="left:34px;top:413px" width="16" height="14" shape-rendering="crispEdges"><g fill="#808080"><rect x="2" y="0" width="5" height="1"/><rect x="1" y="1" width="1" height="1"/><rect x="7" y="1" width="1" height="1"/><rect x="8" y="2" width="6" height="1"/><rect x="0" y="2" width="1" height="11"/><rect x="13" y="2" width="1" height="11"/><rect x="1" y="11" width="13" height="1"/></g><rect x="2" y="1" width="5" height="1" fill="url(#dth)"/><rect x="1" y="2" width="7" height="1" fill="url(#dth)"/><rect x="1" y="3" width="12" height="1" fill="#fff"/><rect x="1" y="3" width="1" height="8" fill="#fff"/><rect x="2" y="4" width="11" height="7" fill="url(#dth)"/><g fill="#000"><rect x="14" y="3" width="1" height="10"/><rect x="1" y="12" width="14" height="1"/></g></svg>
<div id="t36" class="t" style="left:55.05px;top:413px;font-size:12px;color:#000;font-weight:normal;font-family:'Liberation Sans',sans-serif;line-height:14px;white-space:pre;transform:scaleX(0.8947);transform-origin:0 0;">ETH_INTF</div>
<svg style="left:34px;top:431px" width="16" height="14" shape-rendering="crispEdges"><g fill="#808080"><rect x="2" y="0" width="5" height="1"/><rect x="1" y="1" width="1" height="1"/><rect x="7" y="1" width="1" height="1"/><rect x="8" y="2" width="6" height="1"/><rect x="0" y="2" width="1" height="11"/><rect x="13" y="2" width="1" height="11"/><rect x="1" y="11" width="13" height="1"/></g><rect x="2" y="1" width="5" height="1" fill="url(#dth)"/><rect x="1" y="2" width="7" height="1" fill="url(#dth)"/><rect x="1" y="3" width="12" height="1" fill="#fff"/><rect x="1" y="3" width="1" height="8" fill="#fff"/><rect x="2" y="4" width="11" height="7" fill="url(#dth)"/><g fill="#000"><rect x="14" y="3" width="1" height="10"/><rect x="1" y="12" width="14" height="1"/></g></svg>
<div id="t37" class="t" style="left:55.06px;top:431px;font-size:12px;color:#000;font-weight:normal;font-family:'Liberation Sans',sans-serif;line-height:14px;white-space:pre;transform:scaleX(0.8833);transform-origin:0 0;">PTP_TASK</div>
<svg style="left:34px;top:449px" width="16" height="14" shape-rendering="crispEdges"><g fill="#808080"><rect x="2" y="0" width="5" height="1"/><rect x="1" y="1" width="1" height="1"/><rect x="7" y="1" width="1" height="1"/><rect x="8" y="2" width="6" height="1"/><rect x="0" y="2" width="1" height="11"/><rect x="13" y="2" width="1" height="11"/><rect x="1" y="11" width="13" height="1"/></g><rect x="2" y="1" width="5" height="1" fill="url(#dth)"/><rect x="1" y="2" width="7" height="1" fill="url(#dth)"/><rect x="1" y="3" width="12" height="1" fill="#fff"/><rect x="1" y="3" width="1" height="8" fill="#fff"/><rect x="2" y="4" width="11" height="7" fill="url(#dth)"/><g fill="#000"><rect x="14" y="3" width="1" height="10"/><rect x="1" y="12" width="14" height="1"/></g></svg>
<div id="t38" class="t" style="left:55.06px;top:449px;font-size:12px;color:#000;font-weight:normal;font-family:'Liberation Sans',sans-serif;line-height:14px;white-space:pre;transform:scaleX(0.8750);transform-origin:0 0;">PACKET_ROUTER</div>
<svg style="left:15px;top:467px" width="17" height="13" shape-rendering="crispEdges"><g fill="#808080"><rect x="3" y="0" width="5" height="1"/><rect x="2" y="1" width="1" height="1"/><rect x="8" y="1" width="1" height="2"/><rect x="9" y="2" width="6" height="1"/><rect x="1" y="2" width="1" height="4"/><rect x="14" y="3" width="1" height="8"/><rect x="0" y="6" width="13" height="1"/><rect x="2" y="11" width="12" height="1"/></g><rect x="3" y="1" width="5" height="2" fill="url(#dth)"/><rect x="2" y="3" width="12" height="3" fill="url(#dth)"/><rect x="1" y="7" width="2" height="4" fill="#fff"/><rect x="3" y="7" width="9" height="4" fill="url(#dth)"/><g fill="#000"><rect x="12" y="7" width="1" height="1"/><rect x="12" y="8" width="2" height="1"/><rect x="13" y="9" width="1" height="2"/><rect x="15" y="3" width="1" height="10"/><rect x="3" y="12" width="13" height="1"/></g></svg>
<div id="t39" class="t" style="left:36.00px;top:467px;font-size:12px;color:#000;font-weight:normal;font-family:'Liberation Sans',sans-serif;line-height:14px;white-space:pre;transform:scaleX(1.0357);transform-origin:0 0;">Tools</div>
<div id="t40" class="t" style="left:55.00px;top:485px;font-size:12px;color:#000;font-weight:normal;font-family:'Liberation Sans',sans-serif;line-height:14px;white-space:pre;transform:scaleX(1.0063);transform-origin:0 0;">Packet Monitor</div>
<svg style="left:35px;top:503px" width="16" height="14"><polygon points="1,4 9,4 9,1 15,7 1,7" fill="#c4c4c4"/><polygon points="1,7 15,7 9,13 9,10 1,10" fill="#000"/><polygon points="1,4 4,7 2,10 1,10" fill="#8a8a8a"/></svg>
<div id="t41" class="t" style="left:54.99px;top:503px;font-size:12px;color:#000;font-weight:normal;font-family:'Liberation Sans',sans-serif;line-height:14px;white-space:pre;transform:scaleX(1.0286);transform-origin:0 0;">IO Monitor</div>
<div id="t42" class="t" style="left:184.33px;top:141px;font-size:11px;color:#000;font-weight:normal;font-family:'Liberation Sans',sans-serif;line-height:13px;white-space:pre;transform:scaleX(0.9149);transform-origin:0 0;"><u>C</u>olumns:</div>
<div id="t43" class="t" style="left:273.89px;top:142px;font-size:11px;color:#000;font-weight:normal;font-family:'Liberation Sans',sans-serif;line-height:13px;white-space:pre;transform:scaleX(0.9091);transform-origin:0 0;">10</div>
<div id="t44" class="t" style="left:592.00px;top:141px;font-size:11px;color:#000;font-weight:normal;font-family:'Liberation Sans',sans-serif;line-height:13px;white-space:pre;transform:scaleX(0.9565);transform-origin:0 0;">Display <u>m</u>ode:</div>
<div id="t45" class="t" style="left:676.00px;top:142px;font-size:11px;color:#000;font-weight:normal;font-family:'Liberation Sans',sans-serif;line-height:13px;white-space:pre;transform:scaleX(0.8750);transform-origin:0 0;">Decimal</div>
<div id="t46" class="t" style="left:184.21px;top:160px;font-size:11px;color:#000;font-weight:normal;font-family:'Liberation Sans',sans-serif;line-height:13px;white-space:pre;transform:scaleX(0.9500);transform-origin:0 0;">Intput data</div>
<div id="t47" class="t" style="left:183.36px;top:182px;font-size:11px;color:#000;font-weight:normal;font-family:'Liberation Sans',sans-serif;line-height:13px;white-space:pre;transform:scaleX(1.0968);transform-origin:0 0;">O<u>f</u>fset:</div>
<div id="t48" class="t" style="left:249.00px;top:183px;font-size:11px;color:#000;font-weight:normal;font-family:'Liberation Sans',sans-serif;line-height:13px;white-space:pre;">0</div>
<div id="t49" class="t" style="left:343.92px;top:183px;font-size:11px;color:#000;font-weight:normal;font-family:'Liberation Sans',sans-serif;line-height:13px;white-space:pre;transform:scaleX(0.8333);transform-origin:0 0;"><u>G</u>o</div>
<div id="t50" class="t" style="left:184.00px;top:366px;font-size:11px;color:#000;font-weight:normal;font-family:'Liberation Sans',sans-serif;line-height:13px;white-space:pre;transform:scaleX(0.9603);transform-origin:0 0;">Output data</div>
<div id="t51" class="t" style="left:183.36px;top:389px;font-size:11px;color:#000;font-weight:normal;font-family:'Liberation Sans',sans-serif;line-height:13px;white-space:pre;transform:scaleX(1.0968);transform-origin:0 0;">Off<u>s</u>et:</div>
<div id="t52" class="t" style="left:248.00px;top:390px;font-size:11px;color:#000;font-weight:normal;font-family:'Liberation Sans',sans-serif;line-height:13px;white-space:pre;">1</div>
<div id="t53" class="t" style="left:343.08px;top:389px;font-size:11px;color:#000;font-weight:normal;font-family:'Liberation Sans',sans-serif;line-height:13px;white-space:pre;transform:scaleX(0.8333);transform-origin:0 0;">G<u>o</u></div>
<div id="t54" class="t" style="left:212.00px;top:207px;font-size:12px;color:#000;font-weight:normal;font-family:'Liberation Sans',sans-serif;line-height:14px;white-space:pre;">0</div>
<div id="t55" class="t" style="left:267.00px;top:207px;font-size:12px;color:#000;font-weight:normal;font-family:'Liberation Sans',sans-serif;line-height:14px;white-space:pre;">1</div>
<div id="t56" class="t" style="left:324.00px;top:207px;font-size:12px;color:#000;font-weight:normal;font-family:'Liberation Sans',sans-serif;line-height:14px;white-space:pre;">2</div>
<div id="t57" class="t" style="left:380.00px;top:207px;font-size:12px;color:#000;font-weight:normal;font-family:'Liberation Sans',sans-serif;line-height:14px;white-space:pre;">3</div>
<div id="t58" class="t" style="left:436.00px;top:207px;font-size:12px;color:#000;font-weight:normal;font-family:'Liberation Sans',sans-serif;line-height:14px;white-space:pre;">4</div>
<div id="t59" class="t" style="left:492.00px;top:207px;font-size:12px;color:#000;font-weight:normal;font-family:'Liberation Sans',sans-serif;line-height:14px;white-space:pre;">5</div>
<div id="t60" class="t" style="left:548.00px;top:207px;font-size:12px;color:#000;font-weight:normal;font-family:'Liberation Sans',sans-serif;line-height:14px;white-space:pre;">6</div>
<div id="t61" class="t" style="left:604.00px;top:207px;font-size:12px;color:#000;font-weight:normal;font-family:'Liberation Sans',sans-serif;line-height:14px;white-space:pre;">7</div>
<div id="t62" class="t" style="left:660.00px;top:207px;font-size:12px;color:#000;font-weight:normal;font-family:'Liberation Sans',sans-serif;line-height:14px;white-space:pre;">8</div>
<div id="t63" class="t" style="left:716.00px;top:207px;font-size:12px;color:#000;font-weight:normal;font-family:'Liberation Sans',sans-serif;line-height:14px;white-space:pre;">9</div>
<div id="t64" class="t" style="left:187.00px;top:223px;font-size:12px;color:#000;font-weight:normal;font-family:'Liberation Sans',sans-serif;line-height:14px;white-space:pre;">0</div>
<div id="t65" class="t" style="left:186.00px;top:239px;font-size:12px;color:#000;font-weight:normal;font-family:'Liberation Sans',sans-serif;line-height:14px;white-space:pre;">10</div>
<div id="t66" class="t" style="left:187.00px;top:255px;font-size:12px;color:#000;font-weight:normal;font-family:'Liberation Sans',sans-serif;line-height:14px;white-space:pre;">20</div>
<div id="t67" class="t" style="left:187.00px;top:271px;font-size:12px;color:#000;font-weight:normal;font-family:'Liberation Sans',sans-serif;line-height:14px;white-space:pre;">30</div>
<div id="t68" class="t" style="left:210.00px;top:223px;font-size:12px;color:#000;font-weight:normal;font-family:'Liberation Sans',sans-serif;line-height:14px;white-space:pre;">0</div>
<div id="t69" class="t" style="left:266.00px;top:223px;font-size:12px;color:#000;font-weight:normal;font-family:'Liberation Sans',sans-serif;line-height:14px;white-space:pre;">0</div>
<div id="t70" class="t" style="left:322.00px;top:223px;font-size:12px;color:#000;font-weight:normal;font-family:'Liberation Sans',sans-serif;line-height:14px;white-space:pre;">0</div>
<div id="t71" class="t" style="left:378.00px;top:223px;font-size:12px;color:#000;font-weight:normal;font-family:'Liberation Sans',sans-serif;line-height:14px;white-space:pre;">0</div>
<div id="t72" class="t" style="left:434.00px;top:223px;font-size:12px;color:#000;font-weight:normal;font-family:'Liberation Sans',sans-serif;line-height:14px;white-space:pre;">0</div>
<div id="t73" class="t" style="left:490.00px;top:223px;font-size:12px;color:#000;font-weight:normal;font-family:'Liberation Sans',sans-serif;line-height:14px;white-space:pre;">0</div>
<div id="t74" class="t" style="left:546.00px;top:223px;font-size:12px;color:#000;font-weight:normal;font-family:'Liberation Sans',sans-serif;line-height:14px;white-space:pre;">0</div>
<div id="t75" class="t" style="left:602.00px;top:223px;font-size:12px;color:#000;font-weight:normal;font-family:'Liberation Sans',sans-serif;line-height:14px;white-space:pre;">0</div>
<div id="t76" class="t" style="left:658.00px;top:223px;font-size:12px;color:#000;font-weight:normal;font-family:'Liberation Sans',sans-serif;line-height:14px;white-space:pre;">0</div>
<div id="t77" class="t" style="left:714.00px;top:223px;font-size:12px;color:#000;font-weight:normal;font-family:'Liberation Sans',sans-serif;line-height:14px;white-space:pre;">0</div>
<div id="t78" class="t" style="left:210.00px;top:239px;font-size:12px;color:#000;font-weight:normal;font-family:'Liberation Sans',sans-serif;line-height:14px;white-space:pre;">0</div>
<div id="t79" class="t" style="left:266.00px;top:239px;font-size:12px;color:#000;font-weight:normal;font-family:'Liberation Sans',sans-serif;line-height:14px;white-space:pre;">0</div>
<div id="t80" class="t" style="left:322.00px;top:239px;font-size:12px;color:#000;font-weight:normal;font-family:'Liberation Sans',sans-serif;line-height:14px;white-space:pre;">0</div>
<div id="t81" class="t" style="left:378.00px;top:239px;font-size:12px;color:#000;font-weight:normal;font-family:'Liberation Sans',sans-serif;line-height:14px;white-space:pre;">0</div>
<div id="t82" class="t" style="left:433.00px;top:239px;font-size:12px;color:#000;font-weight:normal;font-family:'Liberation Sans',sans-serif;line-height:14px;white-space:pre;">111</div>
<div id="t83" class="t" style="left:490.00px;top:239px;font-size:12px;color:#000;font-weight:normal;font-family:'Liberation Sans',sans-serif;line-height:14px;white-space:pre;">0</div>
<div id="t84" class="t" style="left:546.00px;top:239px;font-size:12px;color:#000;font-weight:normal;font-family:'Liberation Sans',sans-serif;line-height:14px;white-space:pre;">0</div>
<div id="t85" class="t" style="left:602.00px;top:239px;font-size:12px;color:#000;font-weight:normal;font-family:'Liberation Sans',sans-serif;line-height:14px;white-space:pre;">0</div>
<div id="t86" class="t" style="left:658.00px;top:239px;font-size:12px;color:#000;font-weight:normal;font-family:'Liberation Sans',sans-serif;line-height:14px;white-space:pre;">0</div>
<div id="t87" class="t" style="left:714.00px;top:239px;font-size:12px;color:#000;font-weight:normal;font-family:'Liberation Sans',sans-serif;line-height:14px;white-space:pre;">0</div>
<div id="t88" class="t" style="left:210.00px;top:255px;font-size:12px;color:#000;font-weight:normal;font-family:'Liberation Sans',sans-serif;line-height:14px;white-space:pre;">0</div>
<div id="t89" class="t" style="left:266.00px;top:255px;font-size:12px;color:#000;font-weight:normal;font-family:'Liberation Sans',sans-serif;line-height:14px;white-space:pre;">0</div>
<div id="t90" class="t" style="left:322.00px;top:255px;font-size:12px;color:#000;font-weight:normal;font-family:'Liberation Sans',sans-serif;line-height:14px;white-space:pre;">0</div>
<div id="t91" class="t" style="left:378.00px;top:255px;font-size:12px;color:#000;font-weight:normal;font-family:'Liberation Sans',sans-serif;line-height:14px;white-space:pre;">0</div>
<div id="t92" class="t" style="left:434.00px;top:255px;font-size:12px;color:#000;font-weight:normal;font-family:'Liberation Sans',sans-serif;line-height:14px;white-space:pre;">0</div>
<div id="t93" class="t" style="left:490.00px;top:255px;font-size:12px;color:#000;font-weight:normal;font-family:'Liberation Sans',sans-serif;line-height:14px;white-space:pre;">0</div>
<div id="t94" class="t" style="left:546.00px;top:255px;font-size:12px;color:#000;font-weight:normal;font-family:'Liberation Sans',sans-serif;line-height:14px;white-space:pre;">0</div>
<div id="t95" class="t" style="left:602.00px;top:255px;font-size:12px;color:#000;font-weight:normal;font-family:'Liberation Sans',sans-serif;line-height:14px;white-space:pre;">0</div>
<div id="t96" class="t" style="left:658.00px;top:255px;font-size:12px;color:#000;font-weight:normal;font-family:'Liberation Sans',sans-serif;line-height:14px;white-space:pre;">0</div>
<div id="t97" class="t" style="left:714.00px;top:255px;font-size:12px;color:#000;font-weight:normal;font-family:'Liberation Sans',sans-serif;line-height:14px;white-space:pre;">0</div>
<div id="t98" class="t" style="left:210.00px;top:271px;font-size:12px;color:#000;font-weight:normal;font-family:'Liberation Sans',sans-serif;line-height:14px;white-space:pre;">0</div>
<div id="t99" class="t" style="left:266.00px;top:271px;font-size:12px;color:#000;font-weight:normal;font-family:'Liberation Sans',sans-serif;line-height:14px;white-space:pre;">0</div>
<div id="t100" class="t" style="left:212.00px;top:415px;font-size:12px;color:#000;font-weight:normal;font-family:'Liberation Sans',sans-serif;line-height:14px;white-space:pre;">0</div>
<div id="t101" class="t" style="left:267.00px;top:415px;font-size:12px;color:#000;font-weight:normal;font-family:'Liberation Sans',sans-serif;line-height:14px;white-space:pre;">1</div>
<div id="t102" class="t" style="left:324.00px;top:415px;font-size:12px;color:#000;font-weight:normal;font-family:'Liberation Sans',sans-serif;line-height:14px;white-space:pre;">2</div>
<div id="t103" class="t" style="left:380.00px;top:415px;font-size:12px;color:#000;font-weight:normal;font-family:'Liberation Sans',sans-serif;line-height:14px;white-space:pre;">3</div>
<div id="t104" class="t" style="left:436.00px;top:415px;font-size:12px;color:#000;font-weight:normal;font-family:'Liberation Sans',sans-serif;line-height:14px;white-space:pre;">4</div>
<div id="t105" class="t" style="left:492.00px;top:415px;font-size:12px;color:#000;font-weight:normal;font-family:'Liberation Sans',sans-serif;line-height:14px;white-space:pre;">5</div>
<div id="t106" class="t" style="left:548.00px;top:415px;font-size:12px;color:#000;font-weight:normal;font-family:'Liberation Sans',sans-serif;line-height:14px;white-space:pre;">6</div>
<div id="t107" class="t" style="left:604.00px;top:415px;font-size:12px;color:#000;font-weight:normal;font-family:'Liberation Sans',sans-serif;line-height:14px;white-space:pre;">7</div>
<div id="t108" class="t" style="left:660.00px;top:415px;font-size:12px;color:#000;font-weight:normal;font-family:'Liberation Sans',sans-serif;line-height:14px;white-space:pre;">8</div>
<div id="t109" class="t" style="left:716.00px;top:415px;font-size:12px;color:#000;font-weight:normal;font-family:'Liberation Sans',sans-serif;line-height:14px;white-space:pre;">9</div>
<div id="t110" class="t" style="left:187.00px;top:431px;font-size:12px;color:#000;font-weight:normal;font-family:'Liberation Sans',sans-serif;line-height:14px;white-space:pre;">0</div>
<div id="t111" class="t" style="left:186.00px;top:447px;font-size:12px;color:#000;font-weight:normal;font-family:'Liberation Sans',sans-serif;line-height:14px;white-space:pre;">10</div>
<div id="t112" class="t" style="left:187.00px;top:463px;font-size:12px;color:#000;font-weight:normal;font-family:'Liberation Sans',sans-serif;line-height:14px;white-space:pre;">20</div>
<div id="t113" class="t" style="left:187.00px;top:479px;font-size:12px;color:#000;font-weight:normal;font-family:'Liberation Sans',sans-serif;line-height:14px;white-space:pre;">30</div>
<div id="t114" class="t" style="left:210.00px;top:431px;font-size:12px;color:#000;font-weight:normal;font-family:'Liberation Sans',sans-serif;line-height:14px;white-space:pre;">25</div>
<div id="t115" class="t" style="left:265.00px;top:431px;font-size:12px;color:#000;font-weight:normal;font-family:'Liberation Sans',sans-serif;line-height:14px;white-space:pre;">12</div>
<div id="t116" class="t" style="left:322.00px;top:431px;font-size:12px;color:#000;font-weight:normal;font-family:'Liberation Sans',sans-serif;line-height:14px;white-space:pre;">0</div>
<div id="t117" class="t" style="left:378.00px;top:431px;font-size:12px;color:#000;font-weight:normal;font-family:'Liberation Sans',sans-serif;line-height:14px;white-space:pre;">0</div>
<div id="t118" class="t" style="left:434.00px;top:431px;font-size:12px;color:#000;font-weight:normal;font-family:'Liberation Sans',sans-serif;line-height:14px;white-space:pre;">0</div>
<div id="t119" class="t" style="left:490.00px;top:431px;font-size:12px;color:#000;font-weight:normal;font-family:'Liberation Sans',sans-serif;line-height:14px;white-space:pre;">0</div>
<div id="t120" class="t" style="left:546.00px;top:431px;font-size:12px;color:#000;font-weight:normal;font-family:'Liberation Sans',sans-serif;line-height:14px;white-space:pre;">0</div>
<div id="t121" class="t" style="left:602.00px;top:431px;font-size:12px;color:#000;font-weight:normal;font-family:'Liberation Sans',sans-serif;line-height:14px;white-space:pre;">0</div>
<div id="t122" class="t" style="left:658.00px;top:431px;font-size:12px;color:#000;font-weight:normal;font-family:'Liberation Sans',sans-serif;line-height:14px;white-space:pre;">0</div>
<div id="t123" class="t" style="left:714.00px;top:431px;font-size:12px;color:#000;font-weight:normal;font-family:'Liberation Sans',sans-serif;line-height:14px;white-space:pre;">0</div>
<div id="t124" class="t" style="left:210.00px;top:447px;font-size:12px;color:#000;font-weight:normal;font-family:'Liberation Sans',sans-serif;line-height:14px;white-space:pre;">0</div>
<div id="t125" class="t" style="left:266.00px;top:447px;font-size:12px;color:#000;font-weight:normal;font-family:'Liberation Sans',sans-serif;line-height:14px;white-space:pre;">0</div>
<div id="t126" class="t" style="left:322.00px;top:447px;font-size:12px;color:#000;font-weight:normal;font-family:'Liberation Sans',sans-serif;line-height:14px;white-space:pre;">0</div>
<div id="t127" class="t" style="left:378.00px;top:447px;font-size:12px;color:#000;font-weight:normal;font-family:'Liberation Sans',sans-serif;line-height:14px;white-space:pre;">0</div>
<div id="t128" class="t" style="left:434.00px;top:447px;font-size:12px;color:#000;font-weight:normal;font-family:'Liberation Sans',sans-serif;line-height:14px;white-space:pre;">0</div>
<div id="t129" class="t" style="left:490.00px;top:447px;font-size:12px;color:#000;font-weight:normal;font-family:'Liberation Sans',sans-serif;line-height:14px;white-space:pre;">0</div>
<div id="t130" class="t" style="left:546.00px;top:447px;font-size:12px;color:#000;font-weight:normal;font-family:'Liberation Sans',sans-serif;line-height:14px;white-space:pre;">0</div>
<div id="t131" class="t" style="left:602.00px;top:447px;font-size:12px;color:#000;font-weight:normal;font-family:'Liberation Sans',sans-serif;line-height:14px;white-space:pre;">0</div>
<div id="t132" class="t" style="left:658.00px;top:447px;font-size:12px;color:#000;font-weight:normal;font-family:'Liberation Sans',sans-serif;line-height:14px;white-space:pre;">0</div>
<div id="t133" class="t" style="left:714.00px;top:447px;font-size:12px;color:#000;font-weight:normal;font-family:'Liberation Sans',sans-serif;line-height:14px;white-space:pre;">0</div>
<div id="t134" class="t" style="left:210.00px;top:463px;font-size:12px;color:#000;font-weight:normal;font-family:'Liberation Sans',sans-serif;line-height:14px;white-space:pre;">0</div>
<div id="t135" class="t" style="left:266.00px;top:463px;font-size:12px;color:#000;font-weight:normal;font-family:'Liberation Sans',sans-serif;line-height:14px;white-space:pre;">0</div>
<div id="t136" class="t" style="left:322.00px;top:463px;font-size:12px;color:#000;font-weight:normal;font-family:'Liberation Sans',sans-serif;line-height:14px;white-space:pre;">0</div>
<div id="t137" class="t" style="left:378.00px;top:463px;font-size:12px;color:#000;font-weight:normal;font-family:'Liberation Sans',sans-serif;line-height:14px;white-space:pre;">0</div>
<div id="t138" class="t" style="left:434.00px;top:463px;font-size:12px;color:#000;font-weight:normal;font-family:'Liberation Sans',sans-serif;line-height:14px;white-space:pre;">0</div>
<div id="t139" class="t" style="left:490.00px;top:463px;font-size:12px;color:#000;font-weight:normal;font-family:'Liberation Sans',sans-serif;line-height:14px;white-space:pre;">0</div>
<div id="t140" class="t" style="left:546.00px;top:463px;font-size:12px;color:#000;font-weight:normal;font-family:'Liberation Sans',sans-serif;line-height:14px;white-space:pre;">0</div>
<div id="t141" class="t" style="left:602.00px;top:463px;font-size:12px;color:#000;font-weight:normal;font-family:'Liberation Sans',sans-serif;line-height:14px;white-space:pre;">0</div>
<div id="t142" class="t" style="left:658.00px;top:463px;font-size:12px;color:#000;font-weight:normal;font-family:'Liberation Sans',sans-serif;line-height:14px;white-space:pre;">0</div>
<div id="t143" class="t" style="left:714.00px;top:463px;font-size:12px;color:#000;font-weight:normal;font-family:'Liberation Sans',sans-serif;line-height:14px;white-space:pre;">0</div>
<div id="t144" class="t" style="left:210.00px;top:479px;font-size:12px;color:#000;font-weight:normal;font-family:'Liberation Sans',sans-serif;line-height:14px;white-space:pre;">0</div>
<div id="t145" class="t" style="left:266.00px;top:479px;font-size:12px;color:#000;font-weight:normal;font-family:'Liberation Sans',sans-serif;line-height:14px;white-space:pre;">0</div>
<div id="t146" class="t" style="left:701.00px;top:543px;font-size:11px;color:#000;font-weight:normal;font-family:'Liberation Sans',sans-serif;line-height:13px;white-space:pre;"><u>U</u>pdate</div>
<div id="t147" class="t" style="left:491.60px;top:596px;font-size:11px;color:#000;font-weight:normal;font-family:'Liberation Sans',sans-serif;line-height:13px;white-space:pre;transform:scaleX(0.7667);transform-origin:0 0;">OK</div>
<div id="t148" class="t" style="left:560.55px;top:596px;font-size:11px;color:#000;font-weight:normal;font-family:'Liberation Sans',sans-serif;line-height:13px;white-space:pre;transform:scaleX(0.9382);transform-origin:0 0;">Cancel</div>
<div id="t149" class="t" style="left:641.00px;top:596px;font-size:11px;color:#838383;font-weight:normal;font-family:'Liberation Sans',sans-serif;line-height:13px;white-space:pre;transform:scaleX(0.9000);transform-origin:0 0;">Apply</div>
<div id="t150" class="t" style="left:722.15px;top:596px;font-size:11px;color:#000;font-weight:normal;font-family:'Liberation Sans',sans-serif;line-height:13px;white-space:pre;transform:scaleX(0.8280);transform-origin:0 0;">Help</div>
<div style="left:0px;top:617px;width:1034px;height:376px;background:#f0f0f0;"></div>
<div style="left:0px;top:617px;width:1034px;height:1px;background:#1a76cc;"></div>
<div style="left:1033px;top:617px;width:1px;height:376px;background:#1a76cc;"></div>
<div style="left:0px;top:992px;width:1034px;height:1px;background:#1a76cc;"></div>
<div style="left:1px;top:618px;width:1032px;height:374px;background:#fcfaf6;"></div>
<div style="left:2px;top:621px;width:1028px;height:368px;background:#000;"></div>
<div style="left:3px;top:622px;width:1026px;height:21px;background:#74b6f0;"></div>
<div style="left:4px;top:644px;width:1024px;height:343px;background:#4a4950;"></div>
<div id="t151" class="t" style="left:7.00px;top:626px;font-size:12px;color:#101828;font-weight:normal;font-family:'Liberation Sans',sans-serif;line-height:14px;white-space:pre;transform:scaleX(0.9551);transform-origin:0 0;">Watch (Project)1</div>
<svg style="left:101px;top:630px" width="876" height="5"><defs><pattern id="dots" width="4" height="4" patternUnits="userSpaceOnUse"><rect x="0" y="0" width="1" height="1" fill="#3d5a78"/><rect x="2" y="2" width="1" height="1" fill="#3d5a78"/></pattern></defs><rect width="876" height="5" fill="url(#dots)"/></svg>
<svg style="left:980px;top:624px" width="48" height="18"><polygon points="4,8.5 12.5,8.5 8.25,13" fill="#000"/><rect x="20.5" y="4.5" width="7" height="8" fill="none" stroke="#000" stroke-width="1.2"/><rect x="20" y="4" width="8" height="2.5" fill="#000"/><g stroke="#000" stroke-width="1.7"><line x1="36" y1="5" x2="44" y2="13"/><line x1="44" y1="5" x2="36" y2="13"/></g></svg>
<div style="left:4px;top:644px;width:1022px;height:16px;background:#3c3c41;"></div>
<div style="left:4px;top:644px;width:2px;height:16px;background:#55545a;"></div>
<div style="left:141px;top:647px;width:1px;height:9px;background:#e8e8e8;"></div>
<div style="left:341px;top:647px;width:1px;height:9px;background:#e8e8e8;"></div>
<div style="left:421px;top:647px;width:1px;height:9px;background:#e8e8e8;"></div>
<div style="left:521px;top:647px;width:1px;height:9px;background:#e8e8e8;"></div>
<div style="left:671px;top:647px;width:1px;height:9px;background:#e8e8e8;"></div>
<div style="left:771px;top:647px;width:1px;height:9px;background:#e8e8e8;"></div>
<div style="left:921px;top:647px;width:1px;height:9px;background:#e8e8e8;"></div>
<div style="left:1021px;top:647px;width:1px;height:9px;background:#e8e8e8;"></div>
<div style="left:1026px;top:647px;width:1px;height:9px;background:#e8e8e8;"></div>
<div id="t152" class="t" style="left:40.00px;top:646px;font-size:12px;color:#f4f4f4;font-weight:normal;font-family:'Liberation Sans',sans-serif;line-height:14px;white-space:pre;transform:scaleX(0.9614);transform-origin:0 0;">Device name</div>
<div id="t153" class="t" style="left:226.00px;top:646px;font-size:12px;color:#f4f4f4;font-weight:normal;font-family:'Liberation Sans',sans-serif;line-height:14px;white-space:pre;transform:scaleX(0.9688);transform-origin:0 0;">Name</div>
<div id="t154" class="t" style="left:348.20px;top:646px;font-size:12px;color:#f4f4f4;font-weight:normal;font-family:'Liberation Sans',sans-serif;line-height:14px;white-space:pre;transform:scaleX(0.9955);transform-origin:0 0;">Online value</div>
<div id="t155" class="t" style="left:453.00px;top:646px;font-size:12px;color:#f4f4f4;font-weight:normal;font-family:'Liberation Sans',sans-serif;line-height:14px;white-space:pre;transform:scaleX(1.0222);transform-origin:0 0;">Modify</div>
<div id="t156" class="t" style="left:570.39px;top:646px;font-size:12px;color:#f4f4f4;font-weight:normal;font-family:'Liberation Sans',sans-serif;line-height:14px;white-space:pre;transform:scaleX(0.9962);transform-origin:0 0;">Comment</div>
<div id="t157" class="t" style="left:696.19px;top:646px;font-size:12px;color:#f4f4f4;font-weight:normal;font-family:'Liberation Sans',sans-serif;line-height:14px;white-space:pre;transform:scaleX(0.9784);transform-origin:0 0;">Data type</div>
<div id="t158" class="t" style="left:839.43px;top:646px;font-size:12px;color:#f4f4f4;font-weight:normal;font-family:'Liberation Sans',sans-serif;line-height:14px;white-space:pre;transform:scaleX(0.8786);transform-origin:0 0;">AT</div>
<div id="t159" class="t" style="left:933.00px;top:646px;font-size:12px;color:#f4f4f4;font-weight:normal;font-family:'Liberation Sans',sans-serif;line-height:14px;white-space:pre;transform:scaleX(0.9935);transform-origin:0 0;">Display format</div>
<div style="left:4px;top:660px;width:1024px;height:20px;background:#4b4b50;"></div>
<div style="left:12px;top:662px;width:123px;height:16px;background:#e5e5e6;border-right:1px solid #c8c8c8;border-bottom:1px solid #d0d0d0"></div>
<div id="t160" class="t" style="left:16.00px;top:663px;font-size:12px;color:#000;font-weight:normal;font-family:'Liberation Sans',sans-serif;line-height:14px;white-space:pre;transform:scaleX(0.9468);transform-origin:0 0;">new_Controller_0</div>
<svg style="left:151px;top:666px" width="11" height="9"><polygon points="0.5,0.5 10.5,0.5 5.5,8.5" fill="#fff"/></svg>
<div style="left:166px;top:662px;width:169px;height:16px;background:#e5e5e6;border-right:1px solid #c8c8c8;border-bottom:1px solid #d0d0d0"></div>
<div id="t161" class="t" style="left:169.00px;top:663px;font-size:12px;color:#000;font-weight:normal;font-family:'Liberation Sans',sans-serif;line-height:14px;white-space:pre;">Input_Struct</div>
<div id="t162" class="t" style="left:677.00px;top:663px;font-size:12px;color:#f2f2f2;font-weight:normal;font-family:'Liberation Sans',sans-serif;line-height:14px;white-space:pre;">Input_Data</div>
<div style="left:4px;top:681px;width:1024px;height:20px;background:#5b5a60;"></div>
<div id="t163" class="t" style="left:185.00px;top:685px;font-size:12px;color:#f2f2f2;font-weight:normal;font-family:'Liberation Sans',sans-serif;line-height:14px;white-space:pre;">OneB</div>
<div id="t164" class="t" style="left:347.00px;top:685px;font-size:12px;color:#f2f2f2;font-weight:normal;font-family:'Liberation Sans',sans-serif;line-height:14px;white-space:pre;">25</div>
<div style="left:427px;top:682px;width:88px;height:18px;background:#e6e6e7;border-top:1px solid #f4f4f4;border-left:1px solid #f0f0f0;border-right:1px solid #bdbdbd;border-bottom:1px solid #b8b8b8"></div>
<div id="t165" class="t" style="left:467.50px;top:684px;font-size:12px;color:#22d02a;font-weight:normal;font-family:'Liberation Sans',sans-serif;line-height:14px;white-space:pre;">0</div>
<div id="t166" class="t" style="left:677.00px;top:684px;font-size:12px;color:#f2f2f2;font-weight:normal;font-family:'Liberation Sans',sans-serif;line-height:14px;white-space:pre;">BYTE</div>
<div style="left:927px;top:684px;width:88px;height:14px;background:#6b6b70;border:1px solid #a0a0a0;border-left:1px solid #000"></div>
<div style="left:994px;top:685px;width:20px;height:12px;background:linear-gradient(#55555c,#36363d);border-left:1px solid #000"></div>
<svg style="left:1000px;top:688px" width="9" height="6"><polygon points="0,0 8.5,0 4.25,5.5" fill="#fff"/></svg>
<div id="t167" class="t" style="left:940.02px;top:684px;font-size:12px;color:#fafafa;font-weight:normal;font-family:'Liberation Sans',sans-serif;line-height:14px;white-space:pre;transform:scaleX(0.9651);transform-origin:0 0;">Decimal</div>
<div style="left:4px;top:702px;width:1024px;height:20px;background:#4b4b50;"></div>
<div id="t168" class="t" style="left:185.00px;top:706px;font-size:12px;color:#f2f2f2;font-weight:normal;font-family:'Liberation Sans',sans-serif;line-height:14px;white-space:pre;">TwoB</div>
<div id="t169" class="t" style="left:347.00px;top:706px;font-size:12px;color:#f2f2f2;font-weight:normal;font-family:'Liberation Sans',sans-serif;line-height:14px;white-space:pre;">12</div>
<div style="left:427px;top:703px;width:88px;height:18px;background:#e6e6e7;border-top:1px solid #f4f4f4;border-left:1px solid #f0f0f0;border-right:1px solid #bdbdbd;border-bottom:1px solid #b8b8b8"></div>
<div id="t170" class="t" style="left:467.50px;top:705px;font-size:12px;color:#22d02a;font-weight:normal;font-family:'Liberation Sans',sans-serif;line-height:14px;white-space:pre;">0</div>
<div id="t171" class="t" style="left:677.00px;top:705px;font-size:12px;color:#f2f2f2;font-weight:normal;font-family:'Liberation Sans',sans-serif;line-height:14px;white-space:pre;">INT</div>
<div style="left:927px;top:705px;width:88px;height:14px;background:#6b6b70;border:1px solid #a0a0a0;border-left:1px solid #000"></div>
<div style="left:994px;top:706px;width:20px;height:12px;background:linear-gradient(#55555c,#36363d);border-left:1px solid #000"></div>
<svg style="left:1000px;top:709px" width="9" height="6"><polygon points="0,0 8.5,0 4.25,5.5" fill="#fff"/></svg>
<div id="t172" class="t" style="left:940.02px;top:705px;font-size:12px;color:#fafafa;font-weight:normal;font-family:'Liberation Sans',sans-serif;line-height:14px;white-space:pre;transform:scaleX(0.9651);transform-origin:0 0;">Decimal</div>
<div style="left:4px;top:723px;width:1024px;height:20px;background:#5b5a60;"></div>
<div id="t173" class="t" style="left:185.00px;top:727px;font-size:12px;color:#f2f2f2;font-weight:normal;font-family:'Liberation Sans',sans-serif;line-height:14px;white-space:pre;">FourB</div>
<div id="t174" class="t" style="left:348.00px;top:727px;font-size:12px;color:#f2f2f2;font-weight:normal;font-family:'Liberation Sans',sans-serif;line-height:14px;white-space:pre;">0</div>
<div style="left:427px;top:724px;width:88px;height:18px;background:#e6e6e7;border-top:1px solid #f4f4f4;border-left:1px solid #f0f0f0;border-right:1px solid #bdbdbd;border-bottom:1px solid #b8b8b8"></div>
<div id="t175" class="t" style="left:467.50px;top:726px;font-size:12px;color:#22d02a;font-weight:normal;font-family:'Liberation Sans',sans-serif;line-height:14px;white-space:pre;">0</div>
<div id="t176" class="t" style="left:677.00px;top:726px;font-size:12px;color:#f2f2f2;font-weight:normal;font-family:'Liberation Sans',sans-serif;line-height:14px;white-space:pre;">DINT</div>
<div style="left:927px;top:726px;width:88px;height:14px;background:#6b6b70;border:1px solid #a0a0a0;border-left:1px solid #000"></div>
<div style="left:994px;top:727px;width:20px;height:12px;background:linear-gradient(#55555c,#36363d);border-left:1px solid #000"></div>
<svg style="left:1000px;top:730px" width="9" height="6"><polygon points="0,0 8.5,0 4.25,5.5" fill="#fff"/></svg>
<div id="t177" class="t" style="left:940.02px;top:726px;font-size:12px;color:#fafafa;font-weight:normal;font-family:'Liberation Sans',sans-serif;line-height:14px;white-space:pre;transform:scaleX(0.9651);transform-origin:0 0;">Decimal</div>
<div style="left:4px;top:744px;width:1024px;height:20px;background:#4b4b50;"></div>
<div id="t178" class="t" style="left:185.00px;top:748px;font-size:12px;color:#f2f2f2;font-weight:normal;font-family:'Liberation Sans',sans-serif;line-height:14px;white-space:pre;">EightB</div>
<div id="t179" class="t" style="left:348.00px;top:748px;font-size:12px;color:#f2f2f2;font-weight:normal;font-family:'Liberation Sans',sans-serif;line-height:14px;white-space:pre;">0</div>
<div style="left:427px;top:745px;width:88px;height:18px;background:#e6e6e7;border-top:1px solid #f4f4f4;border-left:1px solid #f0f0f0;border-right:1px solid #bdbdbd;border-bottom:1px solid #b8b8b8"></div>
<div id="t180" class="t" style="left:467.50px;top:747px;font-size:12px;color:#22d02a;font-weight:normal;font-family:'Liberation Sans',sans-serif;line-height:14px;white-space:pre;">0</div>
<div id="t181" class="t" style="left:677.00px;top:747px;font-size:12px;color:#f2f2f2;font-weight:normal;font-family:'Liberation Sans',sans-serif;line-height:14px;white-space:pre;">LINT</div>
<div style="left:927px;top:747px;width:88px;height:14px;background:#6b6b70;border:1px solid #a0a0a0;border-left:1px solid #000"></div>
<div style="left:994px;top:748px;width:20px;height:12px;background:linear-gradient(#55555c,#36363d);border-left:1px solid #000"></div>
<svg style="left:1000px;top:751px" width="9" height="6"><polygon points="0,0 8.5,0 4.25,5.5" fill="#fff"/></svg>
<div id="t182" class="t" style="left:940.02px;top:747px;font-size:12px;color:#fafafa;font-weight:normal;font-family:'Liberation Sans',sans-serif;line-height:14px;white-space:pre;transform:scaleX(0.9651);transform-origin:0 0;">Decimal</div>
<div style="left:4px;top:765px;width:1024px;height:20px;background:#5b5a60;"></div>
<svg style="left:171px;top:770px" width="9" height="11"><polygon points="0.5,0.5 8.5,5.5 0.5,10.5" fill="#fff"/></svg>
<div id="t183" class="t" style="left:185.00px;top:769px;font-size:12px;color:#f2f2f2;font-weight:normal;font-family:'Liberation Sans',sans-serif;line-height:14px;white-space:pre;">Buff[0-16]</div>
<div style="left:4px;top:786px;width:1024px;height:20px;background:#4b4b50;"></div>
<div style="left:12px;top:788px;width:123px;height:16px;background:#e5e5e6;border-right:1px solid #c8c8c8;border-bottom:1px solid #d0d0d0"></div>
<div id="t184" class="t" style="left:16.00px;top:789px;font-size:12px;color:#000;font-weight:normal;font-family:'Liberation Sans',sans-serif;line-height:14px;white-space:pre;transform:scaleX(0.9468);transform-origin:0 0;">new_Controller_0</div>
<svg style="left:151px;top:792px" width="11" height="9"><polygon points="0.5,0.5 10.5,0.5 5.5,8.5" fill="#fff"/></svg>
<div style="left:166px;top:788px;width:169px;height:16px;background:#e5e5e6;border-right:1px solid #c8c8c8;border-bottom:1px solid #d0d0d0"></div>
<div id="t185" class="t" style="left:169.00px;top:789px;font-size:12px;color:#000;font-weight:normal;font-family:'Liberation Sans',sans-serif;line-height:14px;white-space:pre;">Output_Struct</div>
<div id="t186" class="t" style="left:677.00px;top:789px;font-size:12px;color:#f2f2f2;font-weight:normal;font-family:'Liberation Sans',sans-serif;line-height:14px;white-space:pre;">Output_Data</div>
<div style="left:4px;top:807px;width:1024px;height:20px;background:#5b5a60;"></div>
<div id="t187" class="t" style="left:185.00px;top:811px;font-size:12px;color:#f2f2f2;font-weight:normal;font-family:'Liberation Sans',sans-serif;line-height:14px;white-space:pre;">EightB</div>
<div id="t188" class="t" style="left:348.00px;top:811px;font-size:12px;color:#f2f2f2;font-weight:normal;font-family:'Liberation Sans',sans-serif;line-height:14px;white-space:pre;">0</div>
<div style="left:427px;top:808px;width:88px;height:18px;background:#e6e6e7;border-top:1px solid #f4f4f4;border-left:1px solid #f0f0f0;border-right:1px solid #bdbdbd;border-bottom:1px solid #b8b8b8"></div>
<div id="t189" class="t" style="left:467.50px;top:810px;font-size:12px;color:#22d02a;font-weight:normal;font-family:'Liberation Sans',sans-serif;line-height:14px;white-space:pre;">0</div>
<div id="t190" class="t" style="left:677.00px;top:810px;font-size:12px;color:#f2f2f2;font-weight:normal;font-family:'Liberation Sans',sans-serif;line-height:14px;white-space:pre;">LINT</div>
<div style="left:927px;top:810px;width:88px;height:14px;background:#6b6b70;border:1px solid #a0a0a0;border-left:1px solid #000"></div>
<div style="left:994px;top:811px;width:20px;height:12px;background:linear-gradient(#55555c,#36363d);border-left:1px solid #000"></div>
<svg style="left:1000px;top:814px" width="9" height="6"><polygon points="0,0 8.5,0 4.25,5.5" fill="#fff"/></svg>
<div id="t191" class="t" style="left:940.02px;top:810px;font-size:12px;color:#fafafa;font-weight:normal;font-family:'Liberation Sans',sans-serif;line-height:14px;white-space:pre;transform:scaleX(0.9651);transform-origin:0 0;">Decimal</div>
<div style="left:4px;top:828px;width:1024px;height:20px;background:#4b4b50;"></div>
<div id="t192" class="t" style="left:185.00px;top:832px;font-size:12px;color:#f2f2f2;font-weight:normal;font-family:'Liberation Sans',sans-serif;line-height:14px;white-space:pre;">FourB</div>
<div id="t193" class="t" style="left:348.00px;top:832px;font-size:12px;color:#f2f2f2;font-weight:normal;font-family:'Liberation Sans',sans-serif;line-height:14px;white-space:pre;">0</div>
<div style="left:427px;top:829px;width:88px;height:18px;background:#e6e6e7;border-top:1px solid #f4f4f4;border-left:1px solid #f0f0f0;border-right:1px solid #bdbdbd;border-bottom:1px solid #b8b8b8"></div>
<div id="t194" class="t" style="left:467.50px;top:831px;font-size:12px;color:#22d02a;font-weight:normal;font-family:'Liberation Sans',sans-serif;line-height:14px;white-space:pre;">0</div>
<div id="t195" class="t" style="left:677.00px;top:831px;font-size:12px;color:#f2f2f2;font-weight:normal;font-family:'Liberation Sans',sans-serif;line-height:14px;white-space:pre;">DINT</div>
<div style="left:927px;top:831px;width:88px;height:14px;background:#6b6b70;border:1px solid #a0a0a0;border-left:1px solid #000"></div>
<div style="left:994px;top:832px;width:20px;height:12px;background:linear-gradient(#55555c,#36363d);border-left:1px solid #000"></div>
<svg style="left:1000px;top:835px" width="9" height="6"><polygon points="0,0 8.5,0 4.25,5.5" fill="#fff"/></svg>
<div id="t196" class="t" style="left:940.02px;top:831px;font-size:12px;color:#fafafa;font-weight:normal;font-family:'Liberation Sans',sans-serif;line-height:14px;white-space:pre;transform:scaleX(0.9651);transform-origin:0 0;">Decimal</div>
<div style="left:4px;top:849px;width:1024px;height:20px;background:#5b5a60;"></div>
<div id="t197" class="t" style="left:185.00px;top:853px;font-size:12px;color:#f2f2f2;font-weight:normal;font-family:'Liberation Sans',sans-serif;line-height:14px;white-space:pre;">TwoB</div>
<div id="t198" class="t" style="left:348.00px;top:853px;font-size:12px;color:#f2f2f2;font-weight:normal;font-family:'Liberation Sans',sans-serif;line-height:14px;white-space:pre;">0</div>
<div style="left:427px;top:850px;width:88px;height:18px;background:#e6e6e7;border-top:1px solid #f4f4f4;border-left:1px solid #f0f0f0;border-right:1px solid #bdbdbd;border-bottom:1px solid #b8b8b8"></div>
<div id="t199" class="t" style="left:467.50px;top:852px;font-size:12px;color:#22d02a;font-weight:normal;font-family:'Liberation Sans',sans-serif;line-height:14px;white-space:pre;">0</div>
<div id="t200" class="t" style="left:677.00px;top:852px;font-size:12px;color:#f2f2f2;font-weight:normal;font-family:'Liberation Sans',sans-serif;line-height:14px;white-space:pre;">INT</div>
<div style="left:927px;top:852px;width:88px;height:14px;background:#6b6b70;border:1px solid #a0a0a0;border-left:1px solid #000"></div>
<div style="left:994px;top:853px;width:20px;height:12px;background:linear-gradient(#55555c,#36363d);border-left:1px solid #000"></div>
<svg style="left:1000px;top:856px" width="9" height="6"><polygon points="0,0 8.5,0 4.25,5.5" fill="#fff"/></svg>
<div id="t201" class="t" style="left:940.02px;top:852px;font-size:12px;color:#fafafa;font-weight:normal;font-family:'Liberation Sans',sans-serif;line-height:14px;white-space:pre;transform:scaleX(0.9651);transform-origin:0 0;">Decimal</div>
<div style="left:4px;top:870px;width:1024px;height:20px;background:#6cb4ee;"></div>
<div id="t202" class="t" style="left:185.00px;top:874px;font-size:12px;color:#202020;font-weight:normal;font-family:'Liberation Sans',sans-serif;line-height:14px;white-space:pre;">OneB</div>
<div id="t203" class="t" style="left:347.00px;top:874px;font-size:12px;color:#202020;font-weight:normal;font-family:'Liberation Sans',sans-serif;line-height:14px;white-space:pre;">111</div>
<div style="left:427px;top:871px;width:88px;height:18px;background:#e6e6e7;border-top:1px solid #f4f4f4;border-left:1px solid #f0f0f0;border-right:1px solid #bdbdbd;border-bottom:1px solid #b8b8b8"></div>
<div id="t204" class="t" style="left:461.50px;top:873px;font-size:12px;color:#22d02a;font-weight:normal;font-family:'Liberation Sans',sans-serif;line-height:14px;white-space:pre;">111</div>
<div id="t205" class="t" style="left:677.00px;top:873px;font-size:12px;color:#202020;font-weight:normal;font-family:'Liberation Sans',sans-serif;line-height:14px;white-space:pre;">BYTE</div>
<div style="left:927px;top:873px;width:88px;height:14px;background:#6b6b70;border:1px solid #a0a0a0;border-left:1px solid #000"></div>
<div style="left:994px;top:874px;width:20px;height:12px;background:linear-gradient(#55555c,#36363d);border-left:1px solid #000"></div>
<svg style="left:1000px;top:877px" width="9" height="6"><polygon points="0,0 8.5,0 4.25,5.5" fill="#fff"/></svg>
<div id="t206" class="t" style="left:940.02px;top:873px;font-size:12px;color:#fafafa;font-weight:normal;font-family:'Liberation Sans',sans-serif;line-height:14px;white-space:pre;transform:scaleX(0.9651);transform-origin:0 0;">Decimal</div>
<div style="left:4px;top:891px;width:1024px;height:20px;background:#5b5a60;"></div>
<svg style="left:171px;top:896px" width="9" height="11"><polygon points="0.5,0.5 8.5,5.5 0.5,10.5" fill="#fff"/></svg>
<div id="t207" class="t" style="left:185.00px;top:895px;font-size:12px;color:#f2f2f2;font-weight:normal;font-family:'Liberation Sans',sans-serif;line-height:14px;white-space:pre;">Buff[0-16]</div>
<div style="left:4px;top:912px;width:1024px;height:20px;background:#4b4b50;"></div>
<div style="left:12px;top:914px;width:123px;height:16px;background:#e5e5e6;border-right:1px solid #c8c8c8;border-bottom:1px solid #d0d0d0"></div>
<div id="t208" class="t" style="left:16.00px;top:915px;font-size:12px;color:#000;font-weight:normal;font-family:'Liberation Sans',sans-serif;line-height:14px;white-space:pre;transform:scaleX(0.9468);transform-origin:0 0;">new_Controller_0</div>
<div style="left:166px;top:914px;width:169px;height:17px;background:transparent;border:1px solid #b4b4b4"></div>
<div id="t209" class="t" style="left:169.01px;top:915px;font-size:12px;color:#8a8a8e;font-weight:normal;font-family:'Liberation Sans',sans-serif;line-height:14px;white-space:pre;font-style:italic;transform:scaleX(0.9718);transform-origin:0 0;">Input Name...</div>
<div style="left:141px;top:660px;width:1px;height:272px;background:#000;"></div>
<div style="left:341px;top:660px;width:1px;height:272px;background:#000;"></div>
<div style="left:421px;top:660px;width:1px;height:272px;background:#000;"></div>
<div style="left:521px;top:660px;width:1px;height:272px;background:#000;"></div>
<div style="left:671px;top:660px;width:1px;height:272px;background:#000;"></div>
<div style="left:771px;top:660px;width:1px;height:272px;background:#000;"></div>
<div style="left:921px;top:660px;width:1px;height:272px;background:#000;"></div>
<div style="left:1021px;top:660px;width:1px;height:272px;background:#000;"></div>
<div style="left:4px;top:680px;width:1024px;height:1px;background:#47464c;"></div>
<div style="left:4px;top:701px;width:1024px;height:1px;background:#47464c;"></div>
<div style="left:4px;top:722px;width:1024px;height:1px;background:#47464c;"></div>
<div style="left:4px;top:743px;width:1024px;height:1px;background:#47464c;"></div>
<div style="left:4px;top:764px;width:1024px;height:1px;background:#47464c;"></div>
<div style="left:4px;top:785px;width:1024px;height:1px;background:#47464c;"></div>
<div style="left:4px;top:806px;width:1024px;height:1px;background:#47464c;"></div>
<div style="left:4px;top:827px;width:1024px;height:1px;background:#47464c;"></div>
<div style="left:4px;top:848px;width:1024px;height:1px;background:#47464c;"></div>
<div style="left:4px;top:869px;width:1024px;height:1px;background:#47464c;"></div>
<div style="left:4px;top:890px;width:1024px;height:1px;background:#47464c;"></div>
<div style="left:4px;top:911px;width:1024px;height:1px;background:#47464c;"></div>
<div style="left:4px;top:932px;width:1024px;height:1px;background:#47464c;"></div>
<svg style="left:650px;top:270px" width="17" height="23"><polygon points="2.5,2.5 2.5,18.5 6.5,14.8 9.3,20.5 11.6,19.5 9,14.3 14,14.3" fill="#fff" stroke="#111" stroke-width="1" stroke-linejoin="round"/></svg>
</body></html>
